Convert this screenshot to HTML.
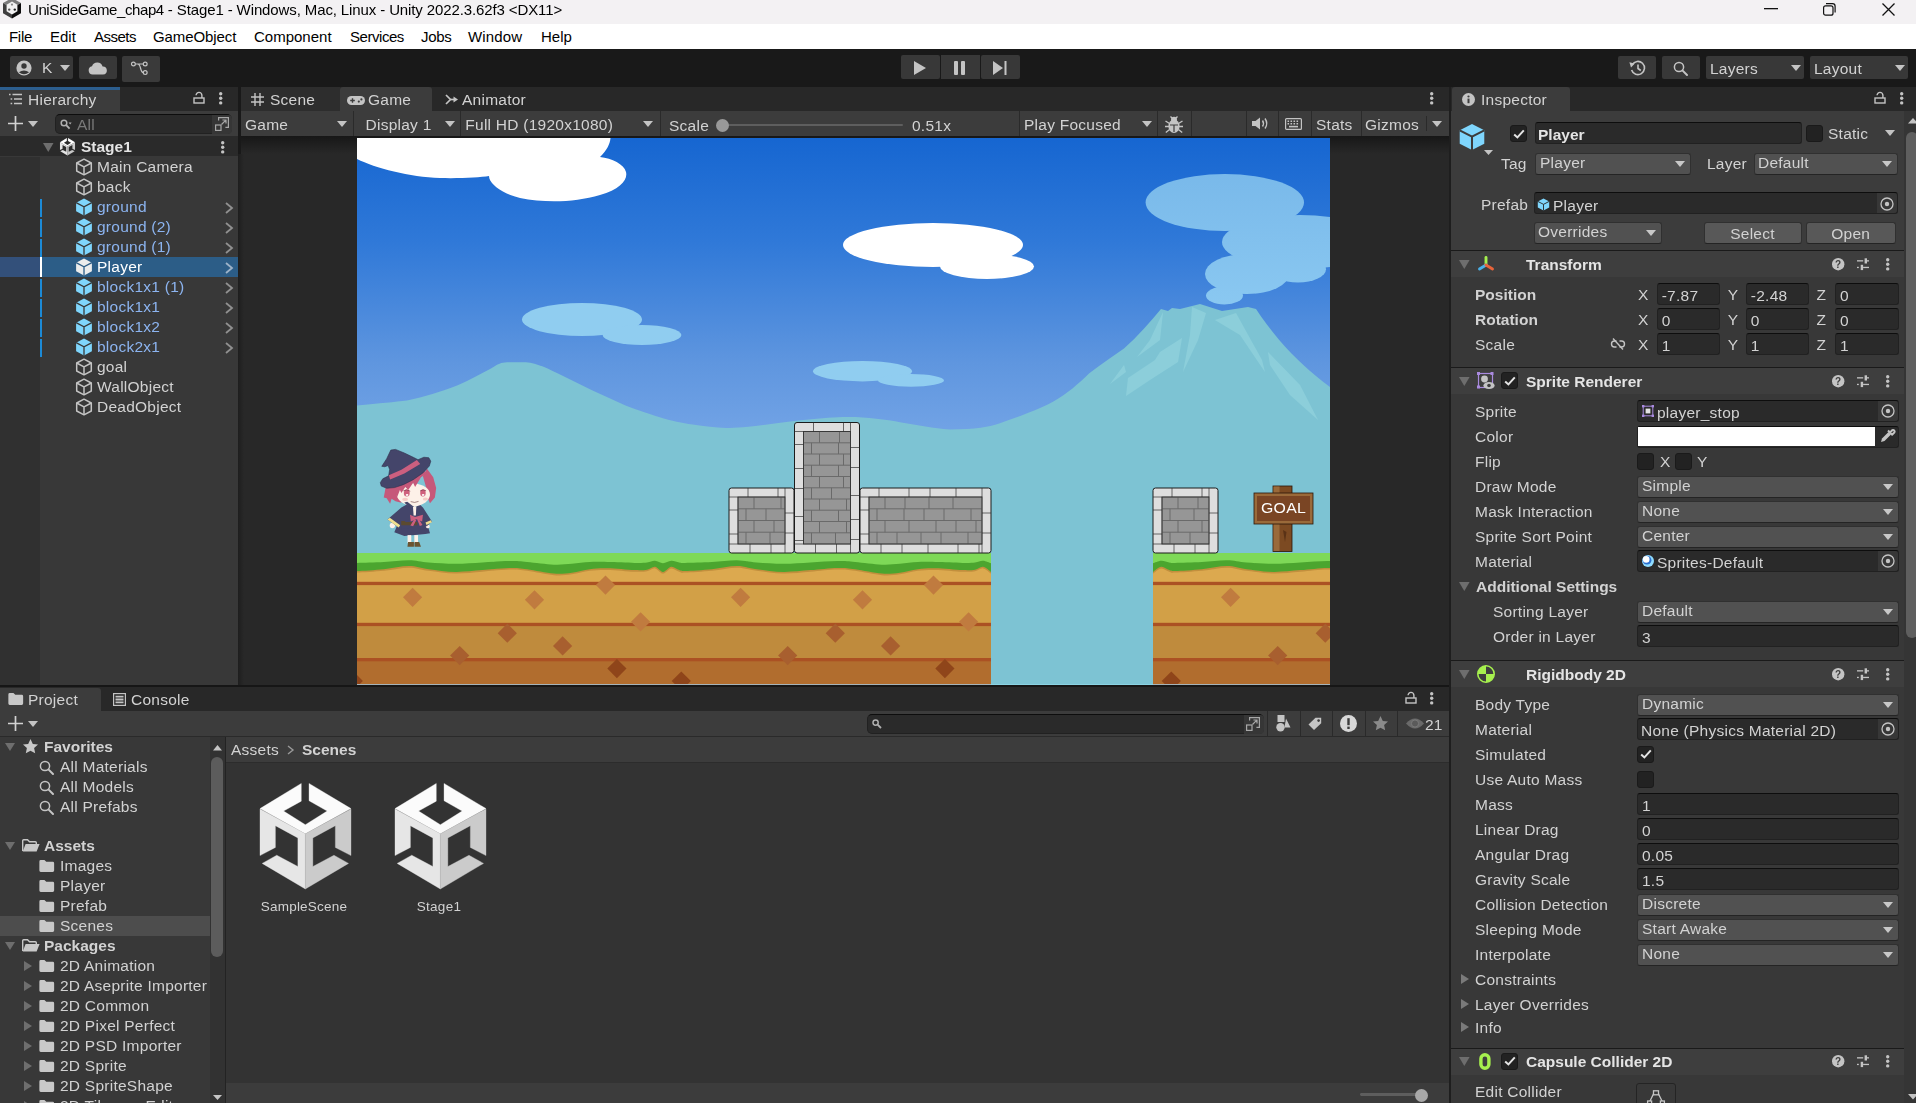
<!DOCTYPE html><html><head><meta charset="utf-8"><title>Unity</title><style>
*{box-sizing:border-box;margin:0;padding:0}
html,body{width:1916px;height:1103px;overflow:hidden;background:#191919}
body{position:relative;font-family:"Liberation Sans",sans-serif;font-size:16px;color:#d2d2d2;line-height:20px;-webkit-font-smoothing:antialiased}
#u{font-size:15.5px;letter-spacing:0.25px;position:absolute;left:0;top:0;width:1916px;height:1103px;will-change:transform}
.a{position:absolute}
.t{position:absolute;white-space:pre;line-height:20px;height:20px}
.b{font-weight:bold;letter-spacing:0}
svg{position:absolute;overflow:visible}
.fld{position:absolute;background:#2a2a2a;border:1px solid #212121;border-top-color:#0d0d0d;border-radius:3px;height:22px}
.dd{position:absolute;background:#515151;border:1px solid #303030;border-bottom-color:#242424;border-radius:3px;height:22px}
.dd:after{content:"";position:absolute;right:5px;top:7px;border-left:5px solid transparent;border-right:5px solid transparent;border-top:6px solid #c8c8c8}
.btn{position:absolute;background:#585858;border:1px solid #303030;border-bottom-color:#242424;border-radius:3px;height:22px;text-align:center;line-height:21px}
.cb{position:absolute;width:17px;height:17px;background:#222;border:1px solid #1a1a1a;border-radius:3px}
.tb{position:absolute;background:#383838;border-radius:2px;top:56px;height:23px}
.sep{position:absolute;background:#1a1a1a;height:1px}
.hdr{position:absolute;background:#3e3e3e;left:1451px;width:453px;height:26px}
.lbl{position:absolute;white-space:pre;line-height:20px;height:20px;left:1475px}
.pf{color:#8cb4f0}
</style></head><body><div class="a" style="left:0px;top:0px;width:1916px;height:24px;background:#f3f1f3;"></div>
<svg style="left:3px;top:-1.6px" width="18" height="20.4" viewBox="0 0 18 20.4" ><path d="M9 0 L18 5 L9 10 L0 5 Z" fill="#7c7c7c"/><path d="M0 5 L9 10 L9 20.4 L0 15.2 Z" fill="#3e3e3e"/><path d="M18 5 L9 10 L9 20.4 L18 15.2 Z" fill="#0c0c0c"/><path d="M9 3.6 L14.4 6.8 L14.4 13.2 L9 16.4 L3.6 13.2 L3.6 6.8 Z" fill="#f2f2f2"/><circle cx="9" cy="6.6" r="1.1" fill="#8a8a8a"/><circle cx="6.2" cy="11.6" r="1.2" fill="#555"/><circle cx="11.8" cy="11.6" r="1.2" fill="#222"/></svg>
<div class="t " style="left:28px;top:0px;color:#000;font-size:15px;letter-spacing:-0.115px;will-change:transform"><span style="letter-spacing:-0.4px">UniSideGame_chap4</span> - Stage1 - Windows, Mac, Linux - Unity 2022.3.62f3 &lt;DX11&gt;</div>
<svg style="left:1764px;top:8px" width="14" height="2" viewBox="0 0 14 2" ><rect width="14" height="1.3" fill="#111"/></svg>
<svg style="left:1823px;top:3px" width="13" height="13" viewBox="0 0 13 13" ><rect x="0.6" y="2.8" width="9.4" height="9.4" rx="2" fill="none" stroke="#111" stroke-width="1.2"/><path d="M3 0.7 H9.5 a2.6 2.6 0 0 1 2.6 2.6 V9.6" fill="none" stroke="#111" stroke-width="1.2"/></svg>
<svg style="left:1882px;top:3px" width="13" height="13" viewBox="0 0 13 13" ><path d="M0.5 0.5 L12.5 12.5 M12.5 0.5 L0.5 12.5" stroke="#111" stroke-width="1.3"/></svg>
<div class="a" style="left:0px;top:24px;width:1916px;height:25px;background:#ffffff;"></div>
<div class="t " style="left:9px;top:27px;color:#000;font-size:15px;letter-spacing:-0.3px">File</div>
<div class="t " style="left:50px;top:27px;color:#000;font-size:15px;letter-spacing:0px">Edit</div>
<div class="t " style="left:94px;top:27px;color:#000;font-size:15px;letter-spacing:-0.5px">Assets</div>
<div class="t " style="left:153px;top:27px;color:#000;font-size:15px;letter-spacing:-0.1px">GameObject</div>
<div class="t " style="left:254px;top:27px;color:#000;font-size:15px;letter-spacing:0px">Component</div>
<div class="t " style="left:350px;top:27px;color:#000;font-size:15px;letter-spacing:-0.45px">Services</div>
<div class="t " style="left:421px;top:27px;color:#000;font-size:15px;letter-spacing:-0.3px">Jobs</div>
<div class="t " style="left:468px;top:27px;color:#000;font-size:15px;letter-spacing:0.15px">Window</div>
<div class="t " style="left:541px;top:27px;color:#000;font-size:15px;letter-spacing:0px">Help</div>
<div id="u">
<div class="a" style="left:0px;top:49px;width:1916px;height:38px;background:#191919;"></div>
<div class="tb" style="left:10px;width:63px"></div><div class="tb" style="left:79px;width:38px"></div><div class="tb" style="left:122px;width:38px;height:26px;background:#3a3a3a"></div>
<svg style="left:16px;top:60px" width="16" height="16" viewBox="0 0 16 16" ><circle cx="8" cy="8" r="7.6" fill="#c4c4c4"/><circle cx="8" cy="6" r="2.7" fill="#383838"/><path d="M2.9 12.2 Q8 8.6 13.1 12.2 Q8 16.4 2.9 12.2 Z" fill="#383838"/></svg>
<div class="t " style="left:42px;top:58px;">K</div>
<svg style="left:60px;top:65px" width="10" height="6" viewBox="0 0 10 6" ><path d="M0 0 L10 0 L5.0 6 Z" fill="#c4c4c4"/></svg>
<svg style="left:88px;top:61px" width="19" height="14" viewBox="0 0 19 14" ><path d="M4.6 13.6 a4.2 4.2 0 0 1 -0.6 -8.3 a5.6 5.6 0 0 1 10.6 0.2 a4 4 0 0 1 0.4 8.1 Z" fill="#c4c4c4"/></svg>
<svg style="left:131px;top:61px" width="17" height="15" viewBox="0 0 17 15" ><g fill="none" stroke="#c4c4c4" stroke-width="1.2"><circle cx="2.4" cy="3" r="1.9"/><circle cx="14.2" cy="3" r="1.9"/><circle cx="14.2" cy="11.6" r="1.9"/><path d="M4.3 3 H12.3 M6.5 3 Q8.5 3 9.5 7 Q10.5 11.6 12.3 11.6"/></g></svg>
<div class="tb" style="left:901px;width:38.5px;top:55.3px;height:24.2px"></div><div class="tb" style="left:941px;width:39px;top:55.3px;height:24.2px;border-radius:0"></div><div class="tb" style="left:981px;width:38.5px;top:55.3px;height:24.2px"></div>
<svg style="left:914px;top:61px" width="12" height="14" viewBox="0 0 12 14" ><path d="M0 0 L12 7 L0 14 Z" fill="#c4c4c4"/></svg>
<svg style="left:954px;top:61px" width="11" height="14" viewBox="0 0 11 14" ><rect x="0" y="0" width="4" height="14" rx="1" fill="#c4c4c4"/><rect x="7" y="0" width="4" height="14" rx="1" fill="#c4c4c4"/></svg>
<svg style="left:993px;top:61px" width="14" height="14" viewBox="0 0 14 14" ><path d="M0 0 L10 7 L0 14 Z" fill="#c4c4c4"/><rect x="11.5" y="0" width="2" height="14" fill="#c4c4c4"/></svg>
<div class="tb" style="left:1618px;width:38px"></div><div class="tb" style="left:1662px;width:38px"></div><div class="tb" style="left:1706px;width:98px"></div><div class="tb" style="left:1810px;width:98px"></div>
<svg style="left:1629px;top:60px" width="17" height="16" viewBox="0 0 17 16" ><g fill="none" stroke="#c4c4c4" stroke-width="1.6"><path d="M3.2 4.6 A6.6 6.6 0 1 1 2.6 10"/><path d="M9 4.5 V8.5 L11.8 10.5"/></g><path d="M0.4 2.2 L5.8 3.4 L2 7.4 Z" fill="#c4c4c4"/></svg>
<svg style="left:1673px;top:61px" width="15" height="15" viewBox="0 0 15 15" ><circle cx="6" cy="6" r="4.6" fill="none" stroke="#c4c4c4" stroke-width="1.5"/><path d="M9.4 9.4 L14 14" stroke="#c4c4c4" stroke-width="2" stroke-linecap="round"/></svg>
<div class="t " style="left:1710px;top:59px;">Layers</div>
<svg style="left:1791px;top:65px" width="10" height="6" viewBox="0 0 10 6" ><path d="M0 0 L10 0 L5.0 6 Z" fill="#c4c4c4"/></svg>
<div class="t " style="left:1814px;top:59px;">Layout</div>
<svg style="left:1895px;top:65px" width="10" height="6" viewBox="0 0 10 6" ><path d="M0 0 L10 0 L5.0 6 Z" fill="#c4c4c4"/></svg>
<div class="a" style="left:0px;top:87px;width:238px;height:24px;background:#282828;"></div>
<div class="a" style="left:0px;top:87px;width:120px;height:24px;background:#3c3c3c;border-radius:0 3px 0 0"></div>
<div class="a" style="left:0px;top:87px;width:120px;height:2.5px;background:#2c5e8e;"></div>
<svg style="left:8px;top:93px" width="14" height="12" viewBox="0 0 14 12" ><g stroke="#c4c4c4" stroke-width="1.6"><path d="M4.5 1.5 H14 M6 6 H14 M6 10.5 H14"/><path d="M1 1.5 H2.6 M2.6 6 H4.2 M2.6 10.5 H4.2"/></g></svg>
<div class="t " style="left:28px;top:90px;">Hierarchy</div>
<svg style="left:193.4px;top:91.3px" width="12" height="13" viewBox="0 0 12 13" ><rect x="1" y="7" width="10" height="5" fill="none" stroke="#c4c4c4" stroke-width="1.4"/><path d="M8.9 7 V4.3 a2.9 2.9 0 0 0 -5.8 0" fill="none" stroke="#c4c4c4" stroke-width="1.4"/></svg>
<svg style="left:219px;top:92px" width="3.4" height="12.6" viewBox="0 0 3.4 12.6" ><circle cx="1.7" cy="1.7" r="1.7" fill="#c4c4c4"/><circle cx="1.7" cy="6.3" r="1.7" fill="#c4c4c4"/><circle cx="1.7" cy="10.9" r="1.7" fill="#c4c4c4"/></svg>
<div class="a" style="left:0px;top:111px;width:238px;height:25px;background:#3c3c3c;"></div>
<svg style="left:8px;top:116px" width="15" height="15" viewBox="0 0 15 15" ><path d="M7.5 0 V15 M0 7.5 H15" stroke="#d2d2d2" stroke-width="1.7"/></svg>
<svg style="left:28px;top:121px" width="10" height="6" viewBox="0 0 10 6" ><path d="M0 0 L10 0 L5.0 6 Z" fill="#c4c4c4"/></svg>
<div class="fld" style="left:55px;top:114px;width:177px;height:20px;border-radius:5px"></div>
<div class="a" style="left:212px;top:115px;width:20px;height:18.5px;background:#363636;border-radius:0 4px 4px 0"></div>
<svg style="left:60px;top:119px" width="11" height="11" viewBox="0 0 11 11" ><circle cx="4" cy="4" r="2.8" fill="none" stroke="#b0b0b0" stroke-width="1.5"/><path d="M6.2 6.2 L9.6 9.6" stroke="#b0b0b0" stroke-width="1.8"/><path d="M8.6 3.6 h3 l-1.5 1.8 Z" fill="#b0b0b0"/></svg>
<div class="t " style="left:77px;top:115px;color:#7a7a7a">All</div>
<svg style="left:215px;top:117px" width="14" height="14" viewBox="0 0 14 14" ><g fill="none" stroke="#a8a8a8" stroke-width="1.2"><path d="M3.6 3.6 V0.6 H13.4 V10.4 H10.4"/><rect x="0.6" y="8" width="5.4" height="5.4"/><path d="M6.5 7.5 L10.8 3.2 M7.4 3 H11 V6.6"/></g></svg>
<div class="a" style="left:0px;top:137px;width:238px;height:548px;background:#383838;"></div>
<div class="a" style="left:0px;top:157px;width:40px;height:528px;background:#303030;"></div>
<div class="a" style="left:0px;top:136px;width:238px;height:20px;background:#2a2a2a;"></div>
<svg style="left:43px;top:143px" width="10.5" height="9" viewBox="0 0 10.5 9" ><path d="M0 0 H10.5 L5.25 9 Z" fill="#6e6e6e"/></svg>
<svg style="left:59.5px;top:137.8px" width="15" height="17.5" viewBox="72 92 668 778" ><path d="M375 95 L72 280 L405 465 L740 280 L432 95 L432 222 L565 298 L405 398 L245 298 L375 225 Z" fill="#ffffff" stroke="#ffffff" stroke-width="2.5"/>
<path d="M72 282 L405 465 L405 870 L88 682 L195 622 L350 705 L350 495 L185 405 L185 565 L72 625 Z" fill="#e4e4e4" stroke="#e4e4e4" stroke-width="2.5"/>
<path d="M740 282 L405 465 L405 870 L722 682 L615 622 L460 705 L460 495 L625 405 L625 565 L740 625 Z" fill="#c8c8c8" stroke="#c8c8c8" stroke-width="2.5"/></svg>
<div class="t b" style="left:81px;top:137px;color:#e4e4e4">Stage1</div>
<svg style="left:221.2px;top:140.8px" width="3.4" height="12.6" viewBox="0 0 3.4 12.6" ><circle cx="1.7" cy="1.7" r="1.7" fill="#c4c4c4"/><circle cx="1.7" cy="6.3" r="1.7" fill="#c4c4c4"/><circle cx="1.7" cy="10.9" r="1.7" fill="#c4c4c4"/></svg>
<svg style="left:75px;top:158px" width="18" height="18" viewBox="0 0 18 18" ><g fill="none" stroke="#c4c4c4" stroke-width="1.5" stroke-linejoin="round"><path d="M9 1.2 L16.3 5 L16.3 13 L9 16.8 L1.7 13 L1.7 5 Z"/><path d="M1.7 5 L9 8.8 L16.3 5 M9 8.8 L9 16.8"/></g></svg>
<div class="t " style="left:97px;top:157px;">Main Camera</div>
<svg style="left:75px;top:178px" width="18" height="18" viewBox="0 0 18 18" ><g fill="none" stroke="#c4c4c4" stroke-width="1.5" stroke-linejoin="round"><path d="M9 1.2 L16.3 5 L16.3 13 L9 16.8 L1.7 13 L1.7 5 Z"/><path d="M1.7 5 L9 8.8 L16.3 5 M9 8.8 L9 16.8"/></g></svg>
<div class="t " style="left:97px;top:177px;">back</div>
<div class="a" style="left:40px;top:199px;width:2px;height:17.5px;background:#1c8ad6;"></div>
<svg style="left:75px;top:198px" width="18" height="18" viewBox="0 0 18 18" ><path d="M9 0.6 L16.9 4.7 L16.9 13.3 L9 17.4 L1.1 13.3 L1.1 4.7 Z" fill="#7fd6fd"/><path d="M1.1 4.7 L9 8.8 L16.9 4.7 M9 8.8 L9 17.4" fill="none" stroke="#383838" stroke-width="1.3"/></svg>
<div class="t pf" style="left:97px;top:197px;">ground</div>
<svg style="left:225px;top:202px" width="8" height="12" viewBox="0 0 8 12" ><path d="M1 1 L7 6 L1 11" fill="none" stroke="#909090" stroke-width="1.8"/></svg>
<div class="a" style="left:40px;top:219px;width:2px;height:17.5px;background:#1c8ad6;"></div>
<svg style="left:75px;top:218px" width="18" height="18" viewBox="0 0 18 18" ><path d="M9 0.6 L16.9 4.7 L16.9 13.3 L9 17.4 L1.1 13.3 L1.1 4.7 Z" fill="#7fd6fd"/><path d="M1.1 4.7 L9 8.8 L16.9 4.7 M9 8.8 L9 17.4" fill="none" stroke="#383838" stroke-width="1.3"/></svg>
<div class="t pf" style="left:97px;top:217px;">ground (2)</div>
<svg style="left:225px;top:222px" width="8" height="12" viewBox="0 0 8 12" ><path d="M1 1 L7 6 L1 11" fill="none" stroke="#909090" stroke-width="1.8"/></svg>
<div class="a" style="left:40px;top:239px;width:2px;height:17.5px;background:#1c8ad6;"></div>
<svg style="left:75px;top:238px" width="18" height="18" viewBox="0 0 18 18" ><path d="M9 0.6 L16.9 4.7 L16.9 13.3 L9 17.4 L1.1 13.3 L1.1 4.7 Z" fill="#7fd6fd"/><path d="M1.1 4.7 L9 8.8 L16.9 4.7 M9 8.8 L9 17.4" fill="none" stroke="#383838" stroke-width="1.3"/></svg>
<div class="t pf" style="left:97px;top:237px;">ground (1)</div>
<svg style="left:225px;top:242px" width="8" height="12" viewBox="0 0 8 12" ><path d="M1 1 L7 6 L1 11" fill="none" stroke="#909090" stroke-width="1.8"/></svg>
<div class="a" style="left:0px;top:257px;width:238px;height:20px;background:#2c5d87;"></div>
<div class="a" style="left:0px;top:257px;width:40px;height:20px;background:#33507a;"></div>
<div class="a" style="left:40px;top:257px;width:2px;height:20px;background:#ffffff;"></div>
<svg style="left:75px;top:258px" width="18" height="18" viewBox="0 0 18 18" ><path d="M9 0.6 L16.9 4.7 L16.9 13.3 L9 17.4 L1.1 13.3 L1.1 4.7 Z" fill="#ececec"/><path d="M1.1 4.7 L9 8.8 L16.9 4.7 M9 8.8 L9 17.4" fill="none" stroke="#2c5d87" stroke-width="1.3"/></svg>
<div class="t " style="left:97px;top:257px;color:#fff">Player</div>
<svg style="left:225px;top:262px" width="8" height="12" viewBox="0 0 8 12" ><path d="M1 1 L7 6 L1 11" fill="none" stroke="#9db3c9" stroke-width="1.8"/></svg>
<div class="a" style="left:40px;top:279px;width:2px;height:17.5px;background:#1c8ad6;"></div>
<svg style="left:75px;top:278px" width="18" height="18" viewBox="0 0 18 18" ><path d="M9 0.6 L16.9 4.7 L16.9 13.3 L9 17.4 L1.1 13.3 L1.1 4.7 Z" fill="#7fd6fd"/><path d="M1.1 4.7 L9 8.8 L16.9 4.7 M9 8.8 L9 17.4" fill="none" stroke="#383838" stroke-width="1.3"/></svg>
<div class="t pf" style="left:97px;top:277px;">block1x1 (1)</div>
<svg style="left:225px;top:282px" width="8" height="12" viewBox="0 0 8 12" ><path d="M1 1 L7 6 L1 11" fill="none" stroke="#909090" stroke-width="1.8"/></svg>
<div class="a" style="left:40px;top:299px;width:2px;height:17.5px;background:#1c8ad6;"></div>
<svg style="left:75px;top:298px" width="18" height="18" viewBox="0 0 18 18" ><path d="M9 0.6 L16.9 4.7 L16.9 13.3 L9 17.4 L1.1 13.3 L1.1 4.7 Z" fill="#7fd6fd"/><path d="M1.1 4.7 L9 8.8 L16.9 4.7 M9 8.8 L9 17.4" fill="none" stroke="#383838" stroke-width="1.3"/></svg>
<div class="t pf" style="left:97px;top:297px;">block1x1</div>
<svg style="left:225px;top:302px" width="8" height="12" viewBox="0 0 8 12" ><path d="M1 1 L7 6 L1 11" fill="none" stroke="#909090" stroke-width="1.8"/></svg>
<div class="a" style="left:40px;top:319px;width:2px;height:17.5px;background:#1c8ad6;"></div>
<svg style="left:75px;top:318px" width="18" height="18" viewBox="0 0 18 18" ><path d="M9 0.6 L16.9 4.7 L16.9 13.3 L9 17.4 L1.1 13.3 L1.1 4.7 Z" fill="#7fd6fd"/><path d="M1.1 4.7 L9 8.8 L16.9 4.7 M9 8.8 L9 17.4" fill="none" stroke="#383838" stroke-width="1.3"/></svg>
<div class="t pf" style="left:97px;top:317px;">block1x2</div>
<svg style="left:225px;top:322px" width="8" height="12" viewBox="0 0 8 12" ><path d="M1 1 L7 6 L1 11" fill="none" stroke="#909090" stroke-width="1.8"/></svg>
<div class="a" style="left:40px;top:339px;width:2px;height:17.5px;background:#1c8ad6;"></div>
<svg style="left:75px;top:338px" width="18" height="18" viewBox="0 0 18 18" ><path d="M9 0.6 L16.9 4.7 L16.9 13.3 L9 17.4 L1.1 13.3 L1.1 4.7 Z" fill="#7fd6fd"/><path d="M1.1 4.7 L9 8.8 L16.9 4.7 M9 8.8 L9 17.4" fill="none" stroke="#383838" stroke-width="1.3"/></svg>
<div class="t pf" style="left:97px;top:337px;">block2x1</div>
<svg style="left:225px;top:342px" width="8" height="12" viewBox="0 0 8 12" ><path d="M1 1 L7 6 L1 11" fill="none" stroke="#909090" stroke-width="1.8"/></svg>
<svg style="left:75px;top:358px" width="18" height="18" viewBox="0 0 18 18" ><g fill="none" stroke="#c4c4c4" stroke-width="1.5" stroke-linejoin="round"><path d="M9 1.2 L16.3 5 L16.3 13 L9 16.8 L1.7 13 L1.7 5 Z"/><path d="M1.7 5 L9 8.8 L16.3 5 M9 8.8 L9 16.8"/></g></svg>
<div class="t " style="left:97px;top:357px;">goal</div>
<svg style="left:75px;top:378px" width="18" height="18" viewBox="0 0 18 18" ><g fill="none" stroke="#c4c4c4" stroke-width="1.5" stroke-linejoin="round"><path d="M9 1.2 L16.3 5 L16.3 13 L9 16.8 L1.7 13 L1.7 5 Z"/><path d="M1.7 5 L9 8.8 L16.3 5 M9 8.8 L9 16.8"/></g></svg>
<div class="t " style="left:97px;top:377px;">WallObject</div>
<svg style="left:75px;top:398px" width="18" height="18" viewBox="0 0 18 18" ><g fill="none" stroke="#c4c4c4" stroke-width="1.5" stroke-linejoin="round"><path d="M9 1.2 L16.3 5 L16.3 13 L9 16.8 L1.7 13 L1.7 5 Z"/><path d="M1.7 5 L9 8.8 L16.3 5 M9 8.8 L9 16.8"/></g></svg>
<div class="t " style="left:97px;top:397px;">DeadObject</div>
<div class="a" style="left:241px;top:87px;width:1207.5px;height:24px;background:#282828;"></div>
<div class="a" style="left:241px;top:87px;width:99px;height:24px;background:#2d2d2d;"></div>
<div class="a" style="left:340px;top:87px;width:92px;height:24px;background:#3c3c3c;border-radius:3px 3px 0 0"></div>
<svg style="left:251px;top:93px" width="13" height="13" viewBox="0 0 13 13" ><path d="M4 0 V13 M9 0 V13 M0 4 H13 M0 9 H13" stroke="#c4c4c4" stroke-width="1.4"/></svg>
<div class="t " style="left:270px;top:90px;">Scene</div>
<svg style="left:347px;top:96px" width="18" height="9" viewBox="0 0 18 9" ><rect x="0" y="0" width="18" height="9" rx="4.5" fill="#c4c4c4"/><path d="M3.2 4.5 H7.8 M5.5 2.2 V6.8" stroke="#3c3c3c" stroke-width="1.4"/><circle cx="11.8" cy="5.6" r="1.1" fill="#3c3c3c"/><circle cx="14.4" cy="3.4" r="1.1" fill="#3c3c3c"/></svg>
<div class="t " style="left:368px;top:90px;">Game</div>
<svg style="left:445px;top:94px" width="13" height="11" viewBox="0 0 13 11" ><g fill="none" stroke="#c4c4c4" stroke-width="1.7"><path d="M1 1 L5.5 5.5 L1 10"/><path d="M5.5 5.5 H9.5"/></g><path d="M8.5 2.5 L13 5.5 L8.5 8.5 Z" fill="#c4c4c4"/></svg>
<div class="t " style="left:462px;top:90px;">Animator</div>
<svg style="left:1430px;top:92px" width="3.4" height="12.6" viewBox="0 0 3.4 12.6" ><circle cx="1.7" cy="1.7" r="1.7" fill="#c4c4c4"/><circle cx="1.7" cy="6.3" r="1.7" fill="#c4c4c4"/><circle cx="1.7" cy="10.9" r="1.7" fill="#c4c4c4"/></svg>
<div class="a" style="left:241px;top:111px;width:1207.5px;height:25.3px;background:#3c3c3c;"></div>
<div class="a" style="left:353px;top:111px;width:1px;height:26px;background:#2a2a2a;"></div>
<div class="a" style="left:460px;top:111px;width:1px;height:26px;background:#2a2a2a;"></div>
<div class="a" style="left:660px;top:111px;width:1px;height:26px;background:#2a2a2a;"></div>
<div class="a" style="left:1019px;top:111px;width:1px;height:26px;background:#2a2a2a;"></div>
<div class="a" style="left:1157px;top:111px;width:1px;height:26px;background:#2a2a2a;"></div>
<div class="a" style="left:1190.5px;top:111px;width:1px;height:26px;background:#2a2a2a;"></div>
<div class="a" style="left:1245.5px;top:111px;width:1px;height:26px;background:#2a2a2a;"></div>
<div class="a" style="left:1277.5px;top:111px;width:1px;height:26px;background:#2a2a2a;"></div>
<div class="a" style="left:1310.5px;top:111px;width:1px;height:26px;background:#2a2a2a;"></div>
<div class="a" style="left:1360.5px;top:111px;width:1px;height:26px;background:#2a2a2a;"></div>
<div class="t " style="left:245px;top:115px;">Game</div>
<svg style="left:337px;top:121px" width="10" height="6" viewBox="0 0 10 6" ><path d="M0 0 L10 0 L5.0 6 Z" fill="#c4c4c4"/></svg>
<div class="t " style="left:365.5px;top:115px;">Display 1</div>
<svg style="left:445px;top:121px" width="10" height="6" viewBox="0 0 10 6" ><path d="M0 0 L10 0 L5.0 6 Z" fill="#c4c4c4"/></svg>
<div class="t " style="left:465.3px;top:115px;">Full HD (1920x1080)</div>
<svg style="left:643px;top:121px" width="10" height="6" viewBox="0 0 10 6" ><path d="M0 0 L10 0 L5.0 6 Z" fill="#c4c4c4"/></svg>
<div class="t " style="left:669px;top:116px;">Scale</div>
<div class="a" style="left:727px;top:123.6px;width:176px;height:2.8px;background:#5e5e5e;border-radius:1.4px"></div>
<div class="a" style="left:716px;top:119px;width:13px;height:13px;border-radius:50%;background:#999"></div>
<div class="t " style="left:912px;top:116px;">0.51x</div>
<div class="t " style="left:1024px;top:115px;">Play Focused</div>
<svg style="left:1142px;top:121px" width="10" height="6" viewBox="0 0 10 6" ><path d="M0 0 L10 0 L5.0 6 Z" fill="#c4c4c4"/></svg>
<svg style="left:1165px;top:116px" width="18" height="18" viewBox="0 0 18 18" ><g fill="#c4c4c4"><ellipse cx="9" cy="10.2" rx="5.6" ry="6.8"/><circle cx="9" cy="3.8" r="3"/></g><g stroke="#c4c4c4" stroke-width="1.4"><path d="M0.5 5 L4.5 7.5 M17.5 5 L13.5 7.5 M0 10.5 H4 M18 10.5 H14 M0.8 16.5 L4.6 13.5 M17.2 16.5 L13.4 13.5 M5.5 0.5 L7.5 2.5 M12.5 0.5 L10.5 2.5"/></g><path d="M5 9 H13 M9 9 V16" stroke="#3c3c3c" stroke-width="1.2"/></svg>
<svg style="left:1252px;top:117px" width="17" height="13" viewBox="0 0 17 13" ><path d="M0 4 H3.5 L8 0.5 V12.5 L3.5 9 H0 Z" fill="#c4c4c4"/><path d="M10.5 3.5 Q12.5 6.5 10.5 9.5 M13 1.5 Q16.5 6.5 13 11.5" fill="none" stroke="#c4c4c4" stroke-width="1.4"/></svg>
<svg style="left:1285px;top:118px" width="17" height="12" viewBox="0 0 17 12" ><rect x="0.6" y="0.6" width="15.8" height="10.8" rx="1" fill="none" stroke="#c4c4c4" stroke-width="1.2"/><path d="M2.5 3.2 H14.5 M2.5 5.8 H14.5" stroke="#c4c4c4" stroke-width="1.6" stroke-dasharray="1.6 1.4"/><path d="M4 8.6 H13" stroke="#c4c4c4" stroke-width="1.6"/></svg>
<div class="a" style="left:1426px;top:116px;width:1px;height:15px;background:#2a2a2a;"></div>
<div class="t " style="left:1316px;top:115px;">Stats</div>
<div class="t " style="left:1365px;top:115px;">Gizmos</div>
<svg style="left:1432px;top:121px" width="10" height="6" viewBox="0 0 10 6" ><path d="M0 0 L10 0 L5.0 6 Z" fill="#c4c4c4"/></svg>
<div class="a" style="left:241px;top:136.3px;width:1207.5px;height:548.7px;background:#282828;"></div>
<div class="a" style="left:241px;top:136.3px;width:1207.5px;height:18px;background:linear-gradient(#171717,#282828);"></div>
<div class="a" style="left:238px;top:154px;width:6px;height:531px;background:linear-gradient(to right,#1e1e1e,#282828);"></div>
<svg class="a" style="left:357px;top:138px" width="973" height="546" viewBox="357 138 973 546"><defs><linearGradient id="sky" x1="0" y1="0" x2="0" y2="1"><stop offset="0" stop-color="#1666d1"/><stop offset="0.35" stop-color="#3079d8"/><stop offset="0.75" stop-color="#5f96df"/><stop offset="1" stop-color="#73a4e6"/></linearGradient><linearGradient id="smk" gradientUnits="userSpaceOnUse" x1="0" y1="174" x2="0" y2="305"><stop offset="0" stop-color="#79b9ea"/><stop offset="1" stop-color="#8ac8f1"/></linearGradient><clipPath id="gv"><rect x="357" y="138" width="973" height="546"/></clipPath><clipPath id="g1"><rect x="357" y="540" width="634" height="144.5"/></clipPath><clipPath id="g2"><rect x="1153" y="540" width="177" height="144.5"/></clipPath></defs><g clip-path="url(#gv)"><rect x="357" y="138" width="973" height="300" fill="url(#sky)"/><rect x="357" y="430" width="973" height="255" fill="#7dc3d3"/><g fill="url(#smk)"><ellipse cx="1224.8" cy="202.5" rx="79.2" ry="28.5" fill="url(#smk)"/><ellipse cx="1300.0" cy="242.0" rx="78.0" ry="27.0" fill="url(#smk)"/><ellipse cx="1298.0" cy="269.2" rx="28.0" ry="13.2" fill="url(#smk)"/><ellipse cx="1247.0" cy="274.0" rx="42.0" ry="20.0" fill="url(#smk)"/><ellipse cx="1224.5" cy="295.5" rx="18.5" ry="9.0" fill="url(#smk)"/></g><path d="M357 405.5 C380 403 395 402 407 400.4 C425 397 440 392 457.7 385.3 C470 380 480 374 491 368.5 C497 365 500 362.5 507 362.3 L526 362.3 C535 363 545 367 558 373.5 L592 390.3 L625.5 405.4 C640 411 650 414 659 417 C672 421 682 423 692.6 424.5 C705 426.5 715 427.5 726 428 C750 429 790 419 843 417 C885 416 915 427 950 429.5 C975 429.5 990 427 1000 423.3 C1020 416 1038 410 1053 401.8 C1068 393 1078 384 1089 373.4 C1100 365 1112 357 1124 348.5 C1138 336 1150 322 1161 309 L1168 311 L1172 308 L1180 309 L1200 304 L1222 311 L1248 307 L1256 309 C1275 338 1300 365 1330 387 L1330 440 L357 440 Z" fill="#7dc3d3"/><g fill="#8fd1dc" opacity="0.85"><path d="M1163 312 L1150 340 L1137 357 L1160 340 Z"/><path d="M1192 307 L1206 313 L1198 340 L1183 372 L1190 335 Z"/><path d="M1182 338 L1160 352 L1155 360 L1128 378 L1126 396 L1150 380 L1178 362 Z"/><path d="M1124 365 L1110 384 L1126 372 Z"/><path d="M1215 320 L1236 313 L1262 360 L1265 372 L1240 335 Z"/><path d="M1268 352 L1300 385 L1318 420 L1290 395 L1270 365 Z"/></g><path d="M357 138 L357 159 C375 168 410 177 440 178 C460 178.5 480 177.5 489 176 C489 183 500 193 520 198 C545 203 575 202.5 600 195 C620 189 628 180 626 172 C624 164 612 158.5 600 157 C607 150 610 144 610.5 138 Z" fill="#fff"/><ellipse cx="933.0" cy="245.0" rx="90.0" ry="22.0" fill="#fff"/><ellipse cx="987.0" cy="266.5" rx="47.0" ry="12.5" fill="#fff"/><ellipse cx="582.0" cy="319.5" rx="60.0" ry="16.5" fill="#90cdf0"/><ellipse cx="642.0" cy="335.0" rx="39.4" ry="10.0" fill="#90cdf0"/><ellipse cx="862.5" cy="371.2" rx="49.5" ry="10.2" fill="#90cdf0"/><ellipse cx="911.0" cy="380.4" rx="33.0" ry="6.3" fill="#90cdf0"/><g clip-path="url(#g1)"><rect x="335" y="560" width="656" height="24" fill="#dca94f"/><rect x="335" y="584" width="656" height="41" fill="#d2a047"/><rect x="335" y="625" width="656" height="35" fill="#bf8b3d"/><rect x="335" y="660" width="656" height="25" fill="#b16d2e"/><rect x="335" y="581.8" width="656" height="3.3" fill="#ab5123"/><rect x="335" y="622.8" width="656" height="3.3" fill="#ab5123"/><rect x="335" y="658.0" width="656" height="3.3" fill="#ab5123"/><path d="M412.6 587.7 L422.2 597.3 L412.6 606.9 L403.0 597.3 Z" fill="#c07b3f"/><path d="M534.5 590.2 L544.1 599.8 L534.5 609.4 L524.9 599.8 Z" fill="#c07b3f"/><path d="M605.5 575.5 L615.1 585.1 L605.5 594.7 L595.9 585.1 Z" fill="#c07b3f"/><path d="M640.6 612.2 L650.2 621.8 L640.6 631.4 L631.0 621.8 Z" fill="#c07b3f"/><path d="M507.3 623.6 L516.9 633.2 L507.3 642.8 L497.7 633.2 Z" fill="#a85f2f"/><path d="M562.6 636.3 L572.2 645.9 L562.6 655.5 L553.0 645.9 Z" fill="#a85f2f"/><path d="M459.7 646.0 L469.3 655.6 L459.7 665.2 L450.1 655.6 Z" fill="#a85f2f"/><path d="M616.9 659.0 L626.5 668.6 L616.9 678.2 L607.3 668.6 Z" fill="#8f451a"/><path d="M353.3 671.4 L362.9 681.0 L353.3 690.6 L343.7 681.0 Z" fill="#8f451a"/><path d="M740.6 587.7 L750.2 597.3 L740.6 606.9 L731.0 597.3 Z" fill="#c07b3f"/><path d="M862.5 590.2 L872.1 599.8 L862.5 609.4 L852.9 599.8 Z" fill="#c07b3f"/><path d="M933.5 575.5 L943.1 585.1 L933.5 594.7 L923.9 585.1 Z" fill="#c07b3f"/><path d="M968.6 612.2 L978.2 621.8 L968.6 631.4 L959.0 621.8 Z" fill="#c07b3f"/><path d="M835.3 623.6 L844.9 633.2 L835.3 642.8 L825.7 633.2 Z" fill="#a85f2f"/><path d="M890.6 636.3 L900.2 645.9 L890.6 655.5 L881.0 645.9 Z" fill="#a85f2f"/><path d="M787.7 646.0 L797.3 655.6 L787.7 665.2 L778.1 655.6 Z" fill="#a85f2f"/><path d="M944.9 659.0 L954.5 668.6 L944.9 678.2 L935.3 668.6 Z" fill="#8f451a"/><path d="M681.3 671.4 L690.9 681.0 L681.3 690.6 L671.7 681.0 Z" fill="#8f451a"/><path d="M335 553.1 L335.0 573.5 C336.4 572.6 340.5 568.7 343.2 568.4 C345.9 568.1 348.9 571.0 351.2 571.7 C353.5 572.4 351.6 572.8 357.0 572.6 C362.4 572.5 375.2 571.6 383.9 570.8 C392.5 570.0 401.4 567.7 408.9 567.7 C416.3 567.7 420.8 569.8 428.6 570.8 C436.4 571.8 446.6 573.4 455.5 573.5 C464.4 573.6 473.4 572.4 482.3 571.7 C491.2 571.0 501.7 569.6 509.2 569.5 C516.7 569.4 519.6 569.9 527.1 570.8 C534.6 571.8 546.5 574.6 553.9 575.2 C561.3 575.8 565.8 575.0 571.8 574.3 C577.8 573.6 583.7 571.5 589.7 570.8 C595.7 570.1 600.1 569.8 607.6 569.9 C615.1 570.0 627.9 571.5 634.5 571.7 C641.1 571.9 643.6 571.9 647.0 571.3 C650.4 570.8 652.3 568.0 655.0 568.4 C657.7 568.8 660.3 573.5 663.0 573.5 C665.7 573.5 668.5 568.7 671.2 568.4 C673.9 568.1 676.9 571.0 679.2 571.7 C681.5 572.4 679.5 572.8 685.0 572.6 C690.5 572.5 703.2 571.6 711.9 570.8 C720.5 570.0 729.4 567.7 736.9 567.7 C744.4 567.7 748.8 569.8 756.6 570.8 C764.4 571.8 774.5 573.4 783.5 573.5 C792.5 573.6 801.3 572.4 810.3 571.7 C819.2 571.0 829.7 569.6 837.2 569.5 C844.7 569.4 847.7 569.9 855.1 570.8 C862.5 571.8 874.5 574.6 881.9 575.2 C889.3 575.8 893.8 575.0 899.8 574.3 C905.8 573.6 911.7 571.5 917.7 570.8 C923.7 570.1 928.1 569.8 935.6 569.9 C943.1 570.0 955.9 571.5 962.5 571.7 C969.1 571.9 971.6 571.9 975.0 571.3 C978.4 570.8 980.3 568.0 983.0 568.4 C985.7 568.8 989.7 572.6 991.0 573.5 L991.0 553.1 Z" fill="#9a6a24" opacity="0.4"/><path d="M335 553.1 L335.0 571.9 C336.4 571.0 340.5 567.1 343.2 566.8 C345.9 566.5 348.9 569.4 351.2 570.1 C353.5 570.8 351.6 571.1 357.0 571.0 C362.4 570.9 375.2 570.0 383.9 569.2 C392.5 568.4 401.4 566.1 408.9 566.1 C416.3 566.1 420.8 568.2 428.6 569.2 C436.4 570.2 446.6 571.8 455.5 571.9 C464.4 572.0 473.4 570.8 482.3 570.1 C491.2 569.4 501.7 568.0 509.2 567.9 C516.7 567.8 519.6 568.2 527.1 569.2 C534.6 570.2 546.5 573.0 553.9 573.6 C561.3 574.2 565.8 573.4 571.8 572.7 C577.8 572.0 583.7 569.9 589.7 569.2 C595.7 568.5 600.1 568.1 607.6 568.3 C615.1 568.4 627.9 569.9 634.5 570.1 C641.1 570.3 643.6 570.2 647.0 569.7 C650.4 569.2 652.3 566.4 655.0 566.8 C657.7 567.2 660.3 571.9 663.0 571.9 C665.7 571.9 668.5 567.1 671.2 566.8 C673.9 566.5 676.9 569.4 679.2 570.1 C681.5 570.8 679.5 571.1 685.0 571.0 C690.5 570.9 703.2 570.0 711.9 569.2 C720.5 568.4 729.4 566.1 736.9 566.1 C744.4 566.1 748.8 568.2 756.6 569.2 C764.4 570.2 774.5 571.8 783.5 571.9 C792.5 572.0 801.3 570.8 810.3 570.1 C819.2 569.4 829.7 568.0 837.2 567.9 C844.7 567.8 847.7 568.2 855.1 569.2 C862.5 570.2 874.5 573.0 881.9 573.6 C889.3 574.2 893.8 573.4 899.8 572.7 C905.8 572.0 911.7 569.9 917.7 569.2 C923.7 568.5 928.1 568.1 935.6 568.3 C943.1 568.4 955.9 569.9 962.5 570.1 C969.1 570.3 971.6 570.2 975.0 569.7 C978.4 569.2 980.3 566.4 983.0 566.8 C985.7 567.2 989.7 571.0 991.0 571.9 L991.0 553.1 Z" fill="#4ba52f"/><path d="M335 553.1 L335.0 563.3 C336.4 562.9 340.5 560.9 343.2 560.8 C345.9 560.6 348.9 562.1 351.2 562.5 C353.5 562.9 351.6 563.0 357.0 562.9 C362.4 562.8 375.2 562.5 383.9 562.0 C392.5 561.5 401.4 560.1 408.9 560.2 C416.3 560.3 420.8 561.9 428.6 562.5 C436.4 563.1 446.6 563.8 455.5 563.8 C464.4 563.8 473.4 563.0 482.3 562.5 C491.2 562.0 501.7 561.2 509.2 561.1 C516.7 561.0 519.6 561.4 527.1 562.0 C534.6 562.6 546.5 564.4 553.9 564.7 C561.3 565.0 565.8 564.2 571.8 563.8 C577.8 563.3 583.7 562.3 589.7 562.0 C595.7 561.7 600.1 561.9 607.6 562.0 C615.1 562.1 627.9 562.8 634.5 562.9 C641.1 563.0 643.6 562.9 647.0 562.5 C650.4 562.1 652.3 560.6 655.0 560.8 C657.7 560.9 660.3 563.3 663.0 563.3 C665.7 563.3 668.5 560.9 671.2 560.8 C673.9 560.6 676.9 562.1 679.2 562.5 C681.5 562.9 679.5 563.0 685.0 562.9 C690.5 562.8 703.2 562.5 711.9 562.0 C720.5 561.5 729.4 560.1 736.9 560.2 C744.4 560.3 748.8 561.9 756.6 562.5 C764.4 563.1 774.5 563.8 783.5 563.8 C792.5 563.8 801.3 563.0 810.3 562.5 C819.2 562.0 829.7 561.2 837.2 561.1 C844.7 561.0 847.7 561.4 855.1 562.0 C862.5 562.6 874.5 564.4 881.9 564.7 C889.3 565.0 893.8 564.2 899.8 563.8 C905.8 563.3 911.7 562.3 917.7 562.0 C923.7 561.7 928.1 561.9 935.6 562.0 C943.1 562.1 955.9 562.8 962.5 562.9 C969.1 563.0 971.6 562.9 975.0 562.5 C978.4 562.1 980.3 560.6 983.0 560.8 C985.7 560.9 989.7 562.9 991.0 563.3 L991.0 553.1 Z" fill="#7ed957"/></g><g clip-path="url(#g2)"><rect x="1153" y="560" width="177" height="24" fill="#dca94f"/><rect x="1153" y="584" width="177" height="41" fill="#d2a047"/><rect x="1153" y="625" width="177" height="35" fill="#bf8b3d"/><rect x="1153" y="660" width="177" height="25" fill="#b16d2e"/><rect x="1153" y="581.8" width="177" height="3.3" fill="#ab5123"/><rect x="1153" y="622.8" width="177" height="3.3" fill="#ab5123"/><rect x="1153" y="658.0" width="177" height="3.3" fill="#ab5123"/><path d="M1230.6 587.7 L1240.2 597.3 L1230.6 606.9 L1221.0 597.3 Z" fill="#c07b3f"/><path d="M1352.5 590.2 L1362.1 599.8 L1352.5 609.4 L1342.9 599.8 Z" fill="#c07b3f"/><path d="M1423.5 575.5 L1433.1 585.1 L1423.5 594.7 L1413.9 585.1 Z" fill="#c07b3f"/><path d="M1458.6 612.2 L1468.2 621.8 L1458.6 631.4 L1449.0 621.8 Z" fill="#c07b3f"/><path d="M1325.3 623.6 L1334.9 633.2 L1325.3 642.8 L1315.7 633.2 Z" fill="#a85f2f"/><path d="M1380.6 636.3 L1390.2 645.9 L1380.6 655.5 L1371.0 645.9 Z" fill="#a85f2f"/><path d="M1277.7 646.0 L1287.3 655.6 L1277.7 665.2 L1268.1 655.6 Z" fill="#a85f2f"/><path d="M1434.9 659.0 L1444.5 668.6 L1434.9 678.2 L1425.3 668.6 Z" fill="#8f451a"/><path d="M1171.3 671.4 L1180.9 681.0 L1171.3 690.6 L1161.7 681.0 Z" fill="#8f451a"/><path d="M1153 553.1 L1153.0 573.5 C1154.4 572.6 1158.5 568.7 1161.2 568.4 C1163.9 568.1 1166.9 571.0 1169.2 571.7 C1171.5 572.4 1169.5 572.8 1175.0 572.6 C1180.5 572.5 1193.2 571.6 1201.9 570.8 C1210.6 570.0 1219.5 567.7 1226.9 567.7 C1234.4 567.7 1238.8 569.8 1246.6 570.8 C1254.4 571.8 1264.5 573.4 1273.5 573.5 C1282.5 573.6 1291.3 572.4 1300.3 571.7 C1309.2 571.0 1319.7 569.6 1327.2 569.5 C1334.7 569.4 1337.6 569.9 1345.1 570.8 C1352.5 571.8 1364.5 574.6 1371.9 575.2 C1379.4 575.8 1383.8 575.0 1389.8 574.3 C1395.8 573.6 1401.7 571.5 1407.7 570.8 C1413.7 570.1 1418.1 569.8 1425.6 569.9 C1433.1 570.0 1445.9 571.5 1452.5 571.7 C1459.1 571.9 1461.6 571.9 1465.0 571.3 C1468.4 570.8 1470.3 568.0 1473.0 568.4 C1475.7 568.8 1479.7 572.6 1481.0 573.5 L1481.0 553.1 Z" fill="#9a6a24" opacity="0.4"/><path d="M1153 553.1 L1153.0 571.9 C1154.4 571.0 1158.5 567.1 1161.2 566.8 C1163.9 566.5 1166.9 569.4 1169.2 570.1 C1171.5 570.8 1169.5 571.1 1175.0 571.0 C1180.5 570.9 1193.2 570.0 1201.9 569.2 C1210.6 568.4 1219.5 566.1 1226.9 566.1 C1234.4 566.1 1238.8 568.2 1246.6 569.2 C1254.4 570.2 1264.5 571.8 1273.5 571.9 C1282.5 572.0 1291.3 570.8 1300.3 570.1 C1309.2 569.4 1319.7 568.0 1327.2 567.9 C1334.7 567.8 1337.6 568.2 1345.1 569.2 C1352.5 570.2 1364.5 573.0 1371.9 573.6 C1379.4 574.2 1383.8 573.4 1389.8 572.7 C1395.8 572.0 1401.7 569.9 1407.7 569.2 C1413.7 568.5 1418.1 568.1 1425.6 568.3 C1433.1 568.4 1445.9 569.9 1452.5 570.1 C1459.1 570.3 1461.6 570.2 1465.0 569.7 C1468.4 569.2 1470.3 566.4 1473.0 566.8 C1475.7 567.2 1479.7 571.0 1481.0 571.9 L1481.0 553.1 Z" fill="#4ba52f"/><path d="M1153 553.1 L1153.0 563.3 C1154.4 562.9 1158.5 560.9 1161.2 560.8 C1163.9 560.6 1166.9 562.1 1169.2 562.5 C1171.5 562.9 1169.5 563.0 1175.0 562.9 C1180.5 562.8 1193.2 562.5 1201.9 562.0 C1210.6 561.5 1219.5 560.1 1226.9 560.2 C1234.4 560.3 1238.8 561.9 1246.6 562.5 C1254.4 563.1 1264.5 563.8 1273.5 563.8 C1282.5 563.8 1291.3 563.0 1300.3 562.5 C1309.2 562.0 1319.7 561.2 1327.2 561.1 C1334.7 561.0 1337.6 561.4 1345.1 562.0 C1352.5 562.6 1364.5 564.4 1371.9 564.7 C1379.4 565.0 1383.8 564.2 1389.8 563.8 C1395.8 563.3 1401.7 562.3 1407.7 562.0 C1413.7 561.7 1418.1 561.9 1425.6 562.0 C1433.1 562.1 1445.9 562.8 1452.5 562.9 C1459.1 563.0 1461.6 562.9 1465.0 562.5 C1468.4 562.1 1470.3 560.6 1473.0 560.8 C1475.7 560.9 1479.7 562.9 1481.0 563.3 L1481.0 553.1 Z" fill="#7ed957"/></g><rect x="729" y="488" width="65" height="65" rx="2.5" fill="#dedede" stroke="#1c1c1c" stroke-width="1"/><rect x="738" y="497" width="47" height="47" fill="#969696" stroke="#5a5a5a" stroke-width="1"/><path d="M738 508.8 H785 M738 520.5 H785 M738 532.2 H785 M754.0 497.0 V508.8 M781.0 497.0 V508.8 M746.0 508.8 V520.5 M766.0 508.8 V520.5 M754.0 520.5 V532.2 M774.0 520.5 V532.2 M746.0 532.2 V544.0 M770.0 532.2 V544.0" stroke="#6a6a6a" stroke-width="1" fill="none"/><path d="M748.0 488 V497 M778.0 488 V497 M750.0 544 V553 M771.0 544 V553 M729 510.0 H738 M729 534.0 H738 M785 513.0 H794 M785 533.0 H794 M785 488 V553 M738 497 V544 M729 544 H785 M729 497 H785" stroke="#2a2a2a" stroke-width="0.9" fill="none" opacity="0.75"/><rect x="794.5" y="422.5" width="65" height="130.5" rx="2.5" fill="#dedede" stroke="#1c1c1c" stroke-width="1"/><rect x="803.5" y="431.5" width="47" height="112.5" fill="#969696" stroke="#5a5a5a" stroke-width="1"/><path d="M803.5 442.8 H850.5 M803.5 454.0 H850.5 M803.5 465.2 H850.5 M803.5 476.5 H850.5 M803.5 487.8 H850.5 M803.5 499.0 H850.5 M803.5 510.2 H850.5 M803.5 521.5 H850.5 M803.5 532.8 H850.5 M819.5 431.5 V442.8 M839.5 431.5 V442.8 M811.5 442.8 V454.0 M838.5 442.8 V454.0 M819.5 454.0 V465.2 M843.5 454.0 V465.2 M811.5 465.2 V476.5 M838.5 465.2 V476.5 M819.5 476.5 V487.8 M843.5 476.5 V487.8 M811.5 487.8 V499.0 M831.5 487.8 V499.0 M819.5 499.0 V510.2 M846.5 499.0 V510.2 M811.5 510.2 V521.5 M838.5 510.2 V521.5 M819.5 521.5 V532.8 M846.5 521.5 V532.8 M811.5 532.8 V544.0 M835.5 532.8 V544.0" stroke="#6a6a6a" stroke-width="1" fill="none"/><path d="M813.5 422.5 V431.5 M843.5 422.5 V431.5 M815.5 544.0 V553.0 M836.5 544.0 V553.0 M794.5 444.5 H803.5 M794.5 468.5 H803.5 M794.5 488.5 H803.5 M794.5 516.5 H803.5 M794.5 540.5 H803.5 M850.5 447.5 H859.5 M850.5 467.5 H859.5 M850.5 495.5 H859.5 M850.5 519.5 H859.5 M850.5 539.5 H859.5 M850.5 422.5 V553.0 M803.5 431.5 V544.0 M794.5 544.0 H850.5 M794.5 431.5 H850.5" stroke="#2a2a2a" stroke-width="0.9" fill="none" opacity="0.75"/><rect x="860" y="488" width="131" height="65" rx="2.5" fill="#dedede" stroke="#1c1c1c" stroke-width="1"/><rect x="869" y="497" width="113" height="47" fill="#969696" stroke="#5a5a5a" stroke-width="1"/><path d="M869 508.8 H982 M869 520.5 H982 M869 532.2 H982 M885.0 497.0 V508.8 M905.0 497.0 V508.8 M929.0 497.0 V508.8 M953.0 497.0 V508.8 M877.0 508.8 V520.5 M904.0 508.8 V520.5 M924.0 508.8 V520.5 M944.0 508.8 V520.5 M971.0 508.8 V520.5 M885.0 520.5 V532.2 M909.0 520.5 V532.2 M936.0 520.5 V532.2 M956.0 520.5 V532.2 M976.0 520.5 V532.2 M877.0 532.2 V544.0 M897.0 532.2 V544.0 M921.0 532.2 V544.0 M941.0 532.2 V544.0 M968.0 532.2 V544.0" stroke="#6a6a6a" stroke-width="1" fill="none"/><path d="M879.0 488 V497 M909.0 488 V497 M930.0 488 V497 M956.0 488 V497 M881.0 544 V553 M902.0 544 V553 M928.0 544 V553 M958.0 544 V553 M979.0 544 V553 M860 510.0 H869 M860 534.0 H869 M982 513.0 H991 M982 533.0 H991 M982 488 V553 M869 497 V544 M860 544 H982 M860 497 H982" stroke="#2a2a2a" stroke-width="0.9" fill="none" opacity="0.75"/><rect x="1153" y="488" width="65" height="65" rx="2.5" fill="#dedede" stroke="#1c1c1c" stroke-width="1"/><rect x="1162" y="497" width="47" height="47" fill="#969696" stroke="#5a5a5a" stroke-width="1"/><path d="M1162 508.8 H1209 M1162 520.5 H1209 M1162 532.2 H1209 M1178.0 497.0 V508.8 M1198.0 497.0 V508.8 M1170.0 508.8 V520.5 M1194.0 508.8 V520.5 M1178.0 520.5 V532.2 M1202.0 520.5 V532.2 M1170.0 532.2 V544.0 M1190.0 532.2 V544.0" stroke="#6a6a6a" stroke-width="1" fill="none"/><path d="M1172.0 488 V497 M1202.0 488 V497 M1174.0 544 V553 M1195.0 544 V553 M1153 510.0 H1162 M1153 534.0 H1162 M1209 513.0 H1218 M1209 533.0 H1218 M1209 488 V553 M1162 497 V544 M1153 544 H1209 M1153 497 H1209" stroke="#2a2a2a" stroke-width="0.9" fill="none" opacity="0.75"/><rect x="1273" y="486" width="19" height="65.5" fill="#7c4a22" stroke="#2a1608" stroke-width="0.8"/><rect x="1273.5" y="486.5" width="6" height="64.5" fill="#9a6a3a"/><path d="M1283 530 l2 12 l1.5 -10 Z M1287 500 l1.5 14 l1 -12 Z" fill="#5a3216"/><rect x="1254" y="493" width="59" height="31" fill="#9a6a3a" stroke="#2a1608" stroke-width="0.8"/><rect x="1257" y="496" width="53" height="25" fill="#7a4524"/><text x="1283.5" y="513.4" font-family="Liberation Sans, sans-serif" font-size="15.5" fill="#fff" text-anchor="middle" textLength="45" lengthAdjust="spacingAndGlyphs">GOAL</text><g transform="translate(372 444) scale(0.09796)">
<path d="M560 250 L625 340 L655 450 L642 545 L592 605 L572 560 L560 470 L520 330 Z" fill="#c6587a"/>
<path d="M140 440 L120 545 L150 555 L185 610 L200 560 L240 585 L300 600 L300 430 Z" fill="#c6587a"/>
<path d="M228 900 L330 940 L545 920 L592 912 L560 800 L500 700 L330 700 L270 800 Z" fill="#44456a"/>
<rect x="363" y="930" width="38" height="80" fill="#fdf1e8"/><rect x="432" y="930" width="38" height="80" fill="#fdf1e8"/>
<path d="M368 1000 H428 V1048 H362 Z M434 1000 H482 L500 1048 H434 Z" fill="#6b5430"/>
<circle cx="208" cy="832" r="27" fill="#fdf1e8"/><circle cx="570" cy="842" r="19" fill="#fdf1e8"/>
<path d="M372 608 L300 648 L158 770 L272 852 L292 800 L300 870 L420 850 L470 700 L430 640 Z" fill="#44456a"/>
<path d="M478 608 L522 650 L612 790 L556 842 L540 790 L540 880 L470 860 L440 700 L450 640 Z" fill="#44456a"/>
<path d="M418 640 H452 L448 730 H425 Z" fill="#fdf1e8"/>
<path d="M158 770 L182 752 L288 830 L272 852 Z" fill="#efe08e"/>
<path d="M546 802 L600 778 L612 800 L556 828 Z" fill="#efe08e"/>
<path d="M298 786 H336 L342 796 H462 V830 H298 Z" fill="#5b4a30"/>
<path d="M388 722 L440 745 L520 722 L512 790 L452 768 L396 790 Z" fill="#cc5f7f"/>
<path d="M430 770 L392 832 L420 840 L452 775 Z M462 770 L488 838 L515 828 L480 768 Z" fill="#cc5f7f"/>
<path d="M250 520 Q250 420 420 400 Q590 420 592 520 Q580 610 430 642 Q270 610 250 520 Z" fill="#fdf1e8"/>
<path d="M330 598 L372 640 L430 642 L360 590 Z" fill="#44456a"/>
<ellipse cx="355" cy="500" rx="30" ry="36" fill="#cf5f7c"/><ellipse cx="520" cy="500" rx="28" ry="36" fill="#cf5f7c"/>
<ellipse cx="358" cy="520" rx="14" ry="9" fill="#fff"/><ellipse cx="522" cy="520" rx="14" ry="9" fill="#fff"/>
<path d="M320 478 Q355 455 390 482 M490 480 Q522 456 552 478" stroke="#7a3246" stroke-width="7" fill="none"/>
<ellipse cx="338" cy="565" rx="30" ry="16" fill="#f7cbc6"/><ellipse cx="545" cy="562" rx="26" ry="16" fill="#f7cbc6"/>
<path d="M395 588 Q435 606 475 586" stroke="#6a3c3c" stroke-width="6" fill="none"/>
<path d="M240 470 L250 560 L285 470 L300 500 L340 440 L370 470 L420 395 L440 440 L500 340 L560 300 L520 260 L300 380 Z" fill="#c6587a"/>
<path d="M100 228 L150 150 L192 62 L240 55 L330 92 L420 135 L470 160 L530 135 L580 140 L600 175 L585 225 L520 295 L420 365 L320 415 L230 445 L150 452 L95 430 L85 395 L110 355 L170 325 L180 260 L165 220 L130 232 Z" fill="#44456a" stroke="#2e2f4a" stroke-width="6" stroke-linejoin="round"/>
<path d="M172 318 L300 262 L458 163 L492 203 L330 302 L185 362 Z" fill="#cc5f7f"/>
</g></g></svg>
<div class="a" style="left:357px;top:684px;width:973px;height:1.2px;background:#8ad3e3;"></div>
<div class="a" style="left:357px;top:684px;width:634px;height:1.2px;background:#a6b3b8;"></div>
<div class="a" style="left:1153px;top:684px;width:177px;height:1.2px;background:#a6b3b8;"></div>
<div class="a" style="left:1448.5px;top:87px;width:2.5px;height:1016px;background:#1e1e1e;"></div>
<div class="a" style="left:1451px;top:87px;width:465px;height:24px;background:#282828;"></div>
<div class="a" style="left:1452px;top:87px;width:118px;height:24px;background:#3c3c3c;border-radius:3px 3px 0 0"></div>
<svg style="left:1462px;top:93px" width="13" height="13" viewBox="0 0 13 13" ><circle cx="6.5" cy="6.5" r="6.5" fill="#c4c4c4"/><rect x="5.5" y="5.6" width="2" height="4.6" fill="#3c3c3c"/><circle cx="6.5" cy="3.5" r="1.1" fill="#3c3c3c"/></svg>
<div class="t " style="left:1481px;top:90px;">Inspector</div>
<svg style="left:1874.4px;top:91.3px" width="12" height="13" viewBox="0 0 12 13" ><rect x="1" y="7" width="10" height="5" fill="none" stroke="#c4c4c4" stroke-width="1.4"/><path d="M8.9 7 V4.3 a2.9 2.9 0 0 0 -5.8 0" fill="none" stroke="#c4c4c4" stroke-width="1.4"/></svg>
<svg style="left:1900px;top:92px" width="3.4" height="12.6" viewBox="0 0 3.4 12.6" ><circle cx="1.7" cy="1.7" r="1.7" fill="#c4c4c4"/><circle cx="1.7" cy="6.3" r="1.7" fill="#c4c4c4"/><circle cx="1.7" cy="10.9" r="1.7" fill="#c4c4c4"/></svg>
<div class="a" style="left:1451px;top:111px;width:453px;height:992px;background:#383838;"></div>
<div class="a" style="left:1451px;top:111px;width:453px;height:140px;background:#3c3c3c;"></div>
<div class="a" style="left:1904px;top:111px;width:12px;height:992px;background:#353535;"></div>
<div class="a" style="left:1906px;top:132px;width:12px;height:505.5px;background:#5f5f5f;border-radius:6px"></div>
<svg style="left:1908px;top:118px" width="10" height="5.5" viewBox="0 0 10 5.5" ><path d="M0 5.5 L5 0 L10 5.5 Z" fill="#c4c4c4"/></svg>
<svg style="left:1908px;top:1094px" width="10" height="5.5" viewBox="0 0 10 5.5" ><path d="M0 0 L5 5.5 L10 0 Z" fill="#c4c4c4"/></svg>
<svg style="left:1458px;top:123.2px" width="28" height="28" viewBox="0 0 18 18" ><path d="M9 0.6 L16.9 4.7 L16.9 13.3 L9 17.4 L1.1 13.3 L1.1 4.7 Z" fill="#7fd6fd"/><path d="M1.1 4.7 L9 8.8 L16.9 4.7 M9 8.8 L9 17.4" fill="none" stroke="#3c3c3c" stroke-width="1.3"/></svg>
<svg style="left:1484px;top:150px" width="9" height="5" viewBox="0 0 9 5" ><path d="M0 0 L9 0 L4.5 5 Z" fill="#c4c4c4"/></svg>
<div class="cb" style="left:1510px;top:125px"></div>
<svg style="left:1512.5px;top:128.5px" width="12" height="10" viewBox="0 0 12 10" ><path d="M1.2 5.4 L4.4 8.4 L10.8 1.4" fill="none" stroke="#e4e4e4" stroke-width="2"/></svg>
<div class="fld" style="left:1535px;top:122px;width:267px;height:22.4px"></div>
<div class="t b" style="left:1538px;top:125px;color:#e4e4e4">Player</div>
<div class="cb" style="left:1806px;top:125px"></div>
<div class="t " style="left:1828px;top:124px;">Static</div>
<svg style="left:1885px;top:130px" width="10" height="6" viewBox="0 0 10 6" ><path d="M0 0 L10 0 L5.0 6 Z" fill="#c4c4c4"/></svg>
<div class="t " style="left:1501px;top:154px;">Tag</div>
<div class="dd" style="left:1535px;top:152.5px;width:156px"></div>
<div class="t " style="left:1540px;top:153px;">Player</div>
<div class="t " style="left:1707px;top:154px;">Layer</div>
<div class="dd" style="left:1753.5px;top:152.5px;width:144.5px"></div>
<div class="t " style="left:1758px;top:153px;">Default</div>
<div class="t " style="left:1481px;top:195px;">Prefab</div>
<div class="fld" style="left:1534px;top:192.3px;width:364px"></div>
<div class="a" style="left:1877px;top:193.3px;width:20px;height:20px;background:#373737;border-radius:0 3px 3px 0"></div>
<svg style="left:1537px;top:198px" width="13" height="13" viewBox="0 0 18 18" ><path d="M9 0.6 L16.9 4.7 L16.9 13.3 L9 17.4 L1.1 13.3 L1.1 4.7 Z" fill="#7fd6fd"/><path d="M1.1 4.7 L9 8.8 L16.9 4.7 M9 8.8 L9 17.4" fill="none" stroke="#2a2a2a" stroke-width="1.3"/></svg>
<div class="t " style="left:1553px;top:196px;">Player</div>
<svg style="left:1880px;top:196.8px" width="14" height="14" viewBox="0 0 14 14" ><circle cx="7" cy="7" r="6" fill="none" stroke="#c4c4c4" stroke-width="1.3"/><circle cx="7" cy="7" r="2.2" fill="#c4c4c4"/></svg>
<div class="dd" style="left:1534px;top:221.5px;width:128px"></div>
<div class="t " style="left:1538px;top:222px;">Overrides</div>
<div class="btn" style="left:1703.5px;top:221.7px;width:98px">Select</div><div class="btn" style="left:1805.7px;top:221.7px;width:90px">Open</div>
<div class="sep" style="left:1451px;top:250px;width:453px"></div>
<div class="hdr" style="top:251px"></div>
<svg style="left:1459px;top:259.5px" width="10.6" height="9" viewBox="0 0 10.6 9" ><path d="M0 0 H10.6 L5.3 9 Z" fill="#6e6e6e"/></svg>
<svg style="left:1478px;top:255.5px" width="16" height="15" viewBox="0 0 16 15" ><path d="M8 9 V1.5" stroke="#a6f04e" stroke-width="2.9" stroke-linecap="round"/><path d="M8 9 L1.5 13" stroke="#4ab0e8" stroke-width="2.9" stroke-linecap="round"/><path d="M8 9 L14.5 13" stroke="#e8643a" stroke-width="2.9" stroke-linecap="round"/></svg>
<div class="t b" style="left:1526px;top:254.5px;color:#e4e4e4">Transform</div>
<svg style="left:1831.9px;top:257.8px" width="12.4" height="12.4" viewBox="0 0 12.4 12.4" ><circle cx="6.2" cy="6.2" r="6.2" fill="#c4c4c4"/><text x="6.2" y="10" font-size="10" font-weight="bold" text-anchor="middle" fill="#3e3e3e" font-family="Liberation Sans, sans-serif">?</text></svg>
<svg style="left:1857px;top:257.8px" width="12" height="12.4" viewBox="0 0 12 12.4" ><g fill="#c4c4c4"><rect x="0" y="2.2" width="6.2" height="1.3"/><rect x="7.6" y="0.3" width="2.4" height="5.2"/><rect x="10" y="2.2" width="2" height="1.3"/><rect x="0" y="8.8" width="1.8" height="1.3"/><rect x="3.7" y="6.8" width="2.4" height="5.3"/><rect x="6.1" y="8.8" width="5.9" height="1.3"/></g></svg>
<svg style="left:1886.3px;top:257.7px" width="3.4" height="12.6" viewBox="0 0 3.4 12.6" ><circle cx="1.7" cy="1.7" r="1.7" fill="#c4c4c4"/><circle cx="1.7" cy="6.3" r="1.7" fill="#c4c4c4"/><circle cx="1.7" cy="10.9" r="1.7" fill="#c4c4c4"/></svg>
<div class="t b" style="left:1475px;top:285px;">Position</div>
<div class="t " style="left:1638px;top:285px;">X</div>
<div class="fld" style="left:1656.7px;top:283.2px;width:63.6px"></div>
<div class="t " style="left:1661.7px;top:285.5px;">-7.87</div>
<div class="t " style="left:1727.7px;top:285px;">Y</div>
<div class="fld" style="left:1745.8px;top:283.2px;width:63.6px"></div>
<div class="t " style="left:1750.8px;top:285.5px;">-2.48</div>
<div class="t " style="left:1816.6px;top:285px;">Z</div>
<div class="fld" style="left:1835px;top:283.2px;width:63.6px"></div>
<div class="t " style="left:1840px;top:285.5px;">0</div>
<div class="t b" style="left:1475px;top:310px;">Rotation</div>
<div class="t " style="left:1638px;top:310px;">X</div>
<div class="fld" style="left:1656.7px;top:308.2px;width:63.6px"></div>
<div class="t " style="left:1661.7px;top:310.5px;">0</div>
<div class="t " style="left:1727.7px;top:310px;">Y</div>
<div class="fld" style="left:1745.8px;top:308.2px;width:63.6px"></div>
<div class="t " style="left:1750.8px;top:310.5px;">0</div>
<div class="t " style="left:1816.6px;top:310px;">Z</div>
<div class="fld" style="left:1835px;top:308.2px;width:63.6px"></div>
<div class="t " style="left:1840px;top:310.5px;">0</div>
<div class="t " style="left:1475px;top:335px;">Scale</div>
<div class="t " style="left:1638px;top:335px;">X</div>
<div class="fld" style="left:1656.7px;top:333.2px;width:63.6px"></div>
<div class="t " style="left:1661.7px;top:335.5px;">1</div>
<div class="t " style="left:1727.7px;top:335px;">Y</div>
<div class="fld" style="left:1745.8px;top:333.2px;width:63.6px"></div>
<div class="t " style="left:1750.8px;top:335.5px;">1</div>
<div class="t " style="left:1816.6px;top:335px;">Z</div>
<div class="fld" style="left:1835px;top:333.2px;width:63.6px"></div>
<div class="t " style="left:1840px;top:335.5px;">1</div>
<svg style="left:1610px;top:338px" width="16" height="12" viewBox="0 0 16 12" ><g fill="none" stroke="#c4c4c4" stroke-width="1.4"><path d="M6.5 3 H4.5 a3 3 0 0 0 0 6 H6.5 M9.5 3 H11.5 a3 3 0 0 1 0 6 H9.5"/><path d="M3 0.5 L13 11.5"/></g></svg>
<div class="sep" style="left:1451px;top:367px;width:453px"></div>
<div class="hdr" style="top:368px"></div>
<svg style="left:1459px;top:376.5px" width="10.6" height="9" viewBox="0 0 10.6 9" ><path d="M0 0 H10.6 L5.3 9 Z" fill="#6e6e6e"/></svg>
<svg style="left:1477px;top:371.5px" width="18" height="18" viewBox="0 0 18 18" ><rect x="1.5" y="1.5" width="14" height="14" fill="none" stroke="#a98adf" stroke-width="1.2"/><g fill="#a98adf"><rect x="0" y="0" width="3" height="3"/><rect x="13.5" y="0" width="3" height="3"/><rect x="0" y="13.5" width="3" height="3"/></g><circle cx="7.5" cy="7" r="3.4" fill="#c4c4c4"/><ellipse cx="12" cy="13.5" rx="5.6" ry="3.6" fill="#c4c4c4"/><circle cx="12" cy="13.5" r="1.8" fill="#3e3e3e"/></svg>
<div class="cb" style="left:1501px;top:372.0px"></div>
<svg style="left:1503.5px;top:375.5px" width="12" height="10" viewBox="0 0 12 10" ><path d="M1.2 5.4 L4.4 8.4 L10.8 1.4" fill="none" stroke="#e4e4e4" stroke-width="2"/></svg>
<div class="t b" style="left:1526px;top:371.5px;color:#e4e4e4">Sprite Renderer</div>
<svg style="left:1831.9px;top:374.8px" width="12.4" height="12.4" viewBox="0 0 12.4 12.4" ><circle cx="6.2" cy="6.2" r="6.2" fill="#c4c4c4"/><text x="6.2" y="10" font-size="10" font-weight="bold" text-anchor="middle" fill="#3e3e3e" font-family="Liberation Sans, sans-serif">?</text></svg>
<svg style="left:1857px;top:374.8px" width="12" height="12.4" viewBox="0 0 12 12.4" ><g fill="#c4c4c4"><rect x="0" y="2.2" width="6.2" height="1.3"/><rect x="7.6" y="0.3" width="2.4" height="5.2"/><rect x="10" y="2.2" width="2" height="1.3"/><rect x="0" y="8.8" width="1.8" height="1.3"/><rect x="3.7" y="6.8" width="2.4" height="5.3"/><rect x="6.1" y="8.8" width="5.9" height="1.3"/></g></svg>
<svg style="left:1886.3px;top:374.7px" width="3.4" height="12.6" viewBox="0 0 3.4 12.6" ><circle cx="1.7" cy="1.7" r="1.7" fill="#c4c4c4"/><circle cx="1.7" cy="6.3" r="1.7" fill="#c4c4c4"/><circle cx="1.7" cy="10.9" r="1.7" fill="#c4c4c4"/></svg>
<div class="t " style="left:1475px;top:402px;">Sprite</div>
<div class="fld" style="left:1637px;top:400.2px;width:261.5px"></div>
<div class="a" style="left:1877.5px;top:401.2px;width:20px;height:20px;background:#373737;border-radius:0 3px 3px 0"></div>
<svg style="left:1642px;top:405px" width="12" height="12" viewBox="0 0 12 12" ><rect x="1.2" y="1.2" width="9.6" height="9.6" fill="none" stroke="#a98adf" stroke-width="1"/><g fill="#a98adf"><rect width="2.4" height="2.4"/><rect x="9.6" width="2.4" height="2.4"/><rect y="9.6" width="2.4" height="2.4"/><rect x="9.6" y="9.6" width="2.4" height="2.4"/></g><rect x="3.6" y="3.6" width="4.8" height="4.8" fill="#e4e4e4"/></svg>
<div class="t " style="left:1657px;top:402.5px;">player_stop</div>
<svg style="left:1880.5px;top:404px" width="14" height="14" viewBox="0 0 14 14" ><circle cx="7" cy="7" r="6" fill="none" stroke="#c4c4c4" stroke-width="1.3"/><circle cx="7" cy="7" r="2.2" fill="#c4c4c4"/></svg>
<div class="t " style="left:1475px;top:427px;">Color</div>
<div class="fld" style="left:1637px;top:425.5px;width:261.5px"></div>
<div class="a" style="left:1638px;top:426.5px;width:237px;height:19px;background:#ffffff;"></div>
<svg style="left:1880px;top:428px" width="15" height="15" viewBox="0 0 15 15" ><path d="M1 14 L2 10.5 L8.5 4 L11 6.5 L4.5 13 Z" fill="#c4c4c4"/><path d="M8 2.5 L12.5 7 M9.8 4.8 L12.2 2.2 a1.6 1.6 0 0 1 2.2 2.2 L11.8 7" stroke="#c4c4c4" stroke-width="2" fill="none"/></svg>
<div class="t " style="left:1475px;top:452px;">Flip</div>
<div class="cb" style="left:1637px;top:452.5px"></div>
<div class="t " style="left:1660px;top:452px;">X</div>
<div class="cb" style="left:1675px;top:452.5px"></div>
<div class="t " style="left:1697px;top:452px;">Y</div>
<div class="t " style="left:1475px;top:477px;">Draw Mode</div>
<div class="dd" style="left:1637px;top:475.5px;width:261.5px"></div>
<div class="t " style="left:1642px;top:476.3px;">Simple</div>
<div class="t " style="left:1475px;top:502px;">Mask Interaction</div>
<div class="dd" style="left:1637px;top:500.5px;width:261.5px"></div>
<div class="t " style="left:1642px;top:501.3px;">None</div>
<div class="t " style="left:1475px;top:527px;">Sprite Sort Point</div>
<div class="dd" style="left:1637px;top:525.5px;width:261.5px"></div>
<div class="t " style="left:1642px;top:526.3px;">Center</div>
<div class="t " style="left:1475px;top:552px;">Material</div>
<div class="fld" style="left:1637px;top:550.2px;width:261.5px"></div>
<div class="a" style="left:1877.5px;top:551.2px;width:20px;height:20px;background:#373737;border-radius:0 3px 3px 0"></div>
<svg style="left:1642px;top:555px" width="12" height="12" viewBox="0 0 12 12" ><circle cx="6" cy="6" r="6" fill="#8fdcff"/><circle cx="5" cy="5.2" r="4.4" fill="#2a6fd0"/><circle cx="4.2" cy="4.4" r="3.3" fill="#fff"/></svg>
<div class="t " style="left:1657px;top:552.5px;">Sprites-Default</div>
<svg style="left:1880.5px;top:554px" width="14" height="14" viewBox="0 0 14 14" ><circle cx="7" cy="7" r="6" fill="none" stroke="#c4c4c4" stroke-width="1.3"/><circle cx="7" cy="7" r="2.2" fill="#c4c4c4"/></svg>
<svg style="left:1459px;top:582px" width="10.6" height="9" viewBox="0 0 10.6 9" ><path d="M0 0 H10.6 L5.3 9 Z" fill="#6e6e6e"/></svg>
<div class="t b" style="left:1476px;top:577px;">Additional Settings</div>
<div class="t " style="left:1493px;top:602px;">Sorting Layer</div>
<div class="dd" style="left:1637px;top:600.5px;width:261.5px"></div>
<div class="t " style="left:1642px;top:601.3px;">Default</div>
<div class="t " style="left:1493px;top:627px;">Order in Layer</div>
<div class="fld" style="left:1637px;top:625.2px;width:261.5px"></div>
<div class="t " style="left:1642px;top:627.5px;">3</div>
<div class="sep" style="left:1451px;top:660px;width:453px"></div>
<div class="hdr" style="top:661px"></div>
<svg style="left:1459px;top:669.5px" width="10.6" height="9" viewBox="0 0 10.6 9" ><path d="M0 0 H10.6 L5.3 9 Z" fill="#6e6e6e"/></svg>
<svg style="left:1477px;top:664.5px" width="18" height="18" viewBox="0 0 18 18" ><circle cx="9" cy="9" r="8.2" fill="#3e3e3e" stroke="#a6f04e" stroke-width="1.6"/><path d="M9 9 V0.8 A8.2 8.2 0 0 0 0.8 9 Z M9 9 V17.2 A8.2 8.2 0 0 0 17.2 9 Z" fill="#a6f04e"/></svg>
<div class="t b" style="left:1526px;top:664.5px;color:#e4e4e4">Rigidbody 2D</div>
<svg style="left:1831.9px;top:667.8px" width="12.4" height="12.4" viewBox="0 0 12.4 12.4" ><circle cx="6.2" cy="6.2" r="6.2" fill="#c4c4c4"/><text x="6.2" y="10" font-size="10" font-weight="bold" text-anchor="middle" fill="#3e3e3e" font-family="Liberation Sans, sans-serif">?</text></svg>
<svg style="left:1857px;top:667.8px" width="12" height="12.4" viewBox="0 0 12 12.4" ><g fill="#c4c4c4"><rect x="0" y="2.2" width="6.2" height="1.3"/><rect x="7.6" y="0.3" width="2.4" height="5.2"/><rect x="10" y="2.2" width="2" height="1.3"/><rect x="0" y="8.8" width="1.8" height="1.3"/><rect x="3.7" y="6.8" width="2.4" height="5.3"/><rect x="6.1" y="8.8" width="5.9" height="1.3"/></g></svg>
<svg style="left:1886.3px;top:667.7px" width="3.4" height="12.6" viewBox="0 0 3.4 12.6" ><circle cx="1.7" cy="1.7" r="1.7" fill="#c4c4c4"/><circle cx="1.7" cy="6.3" r="1.7" fill="#c4c4c4"/><circle cx="1.7" cy="10.9" r="1.7" fill="#c4c4c4"/></svg>
<div class="t " style="left:1475px;top:695px;">Body Type</div>
<div class="dd" style="left:1637px;top:693.5px;width:261.5px"></div>
<div class="t " style="left:1642px;top:694.3px;">Dynamic</div>
<div class="t " style="left:1475px;top:720px;">Material</div>
<div class="fld" style="left:1637px;top:718.2px;width:261.5px"></div>
<div class="a" style="left:1877.5px;top:719.2px;width:20px;height:20px;background:#373737;border-radius:0 3px 3px 0"></div>
<div class="t " style="left:1641px;top:720.5px;">None (Physics Material 2D)</div>
<svg style="left:1880.5px;top:722px" width="14" height="14" viewBox="0 0 14 14" ><circle cx="7" cy="7" r="6" fill="none" stroke="#c4c4c4" stroke-width="1.3"/><circle cx="7" cy="7" r="2.2" fill="#c4c4c4"/></svg>
<div class="t " style="left:1475px;top:745px;">Simulated</div>
<div class="cb" style="left:1637px;top:745.5px"></div>
<svg style="left:1639.5px;top:749px" width="12" height="10" viewBox="0 0 12 10" ><path d="M1.2 5.4 L4.4 8.4 L10.8 1.4" fill="none" stroke="#e4e4e4" stroke-width="2"/></svg>
<div class="t " style="left:1475px;top:770px;">Use Auto Mass</div>
<div class="cb" style="left:1637px;top:770.5px"></div>
<div class="t " style="left:1475px;top:795px;">Mass</div>
<div class="fld" style="left:1637px;top:793.2px;width:261.5px"></div>
<div class="t " style="left:1642px;top:795.5px;">1</div>
<div class="t " style="left:1475px;top:820px;">Linear Drag</div>
<div class="fld" style="left:1637px;top:818.2px;width:261.5px"></div>
<div class="t " style="left:1642px;top:820.5px;">0</div>
<div class="t " style="left:1475px;top:845px;">Angular Drag</div>
<div class="fld" style="left:1637px;top:843.2px;width:261.5px"></div>
<div class="t " style="left:1642px;top:845.5px;">0.05</div>
<div class="t " style="left:1475px;top:870px;">Gravity Scale</div>
<div class="fld" style="left:1637px;top:868.2px;width:261.5px"></div>
<div class="t " style="left:1642px;top:870.5px;">1.5</div>
<div class="t " style="left:1475px;top:895px;">Collision Detection</div>
<div class="dd" style="left:1637px;top:893.5px;width:261.5px"></div>
<div class="t " style="left:1642px;top:894.3px;">Discrete</div>
<div class="t " style="left:1475px;top:920px;">Sleeping Mode</div>
<div class="dd" style="left:1637px;top:918.5px;width:261.5px"></div>
<div class="t " style="left:1642px;top:919.3px;">Start Awake</div>
<div class="t " style="left:1475px;top:945px;">Interpolate</div>
<div class="dd" style="left:1637px;top:943.5px;width:261.5px"></div>
<div class="t " style="left:1642px;top:944.3px;">None</div>
<svg style="left:1461px;top:973.5px" width="8" height="10" viewBox="0 0 8 10" ><path d="M0 0 L8 5.0 L0 10 Z" fill="#7a7a7a"/></svg>
<div class="t " style="left:1475px;top:970px;">Constraints</div>
<svg style="left:1461px;top:998.5px" width="8" height="10" viewBox="0 0 8 10" ><path d="M0 0 L8 5.0 L0 10 Z" fill="#7a7a7a"/></svg>
<div class="t " style="left:1475px;top:995px;">Layer Overrides</div>
<svg style="left:1461px;top:1021.5px" width="8" height="10" viewBox="0 0 8 10" ><path d="M0 0 L8 5.0 L0 10 Z" fill="#7a7a7a"/></svg>
<div class="t " style="left:1475px;top:1018px;">Info</div>
<div class="sep" style="left:1451px;top:1047.5px;width:453px"></div>
<div class="hdr" style="top:1048.5px"></div>
<svg style="left:1459px;top:1057.0px" width="10.6" height="9" viewBox="0 0 10.6 9" ><path d="M0 0 H10.6 L5.3 9 Z" fill="#6e6e6e"/></svg>
<svg style="left:1479px;top:1053.0px" width="12" height="17" viewBox="0 0 12 17" ><rect x="1.9" y="1.7" width="8" height="13.6" rx="4" fill="none" stroke="#a6f04e" stroke-width="3.4"/></svg>
<div class="cb" style="left:1501px;top:1052.5px"></div>
<svg style="left:1503.5px;top:1056.0px" width="12" height="10" viewBox="0 0 12 10" ><path d="M1.2 5.4 L4.4 8.4 L10.8 1.4" fill="none" stroke="#e4e4e4" stroke-width="2"/></svg>
<div class="t b" style="left:1526px;top:1052.0px;color:#e4e4e4">Capsule Collider 2D</div>
<svg style="left:1831.9px;top:1055.3px" width="12.4" height="12.4" viewBox="0 0 12.4 12.4" ><circle cx="6.2" cy="6.2" r="6.2" fill="#c4c4c4"/><text x="6.2" y="10" font-size="10" font-weight="bold" text-anchor="middle" fill="#3e3e3e" font-family="Liberation Sans, sans-serif">?</text></svg>
<svg style="left:1857px;top:1055.3px" width="12" height="12.4" viewBox="0 0 12 12.4" ><g fill="#c4c4c4"><rect x="0" y="2.2" width="6.2" height="1.3"/><rect x="7.6" y="0.3" width="2.4" height="5.2"/><rect x="10" y="2.2" width="2" height="1.3"/><rect x="0" y="8.8" width="1.8" height="1.3"/><rect x="3.7" y="6.8" width="2.4" height="5.3"/><rect x="6.1" y="8.8" width="5.9" height="1.3"/></g></svg>
<svg style="left:1886.3px;top:1055.2px" width="3.4" height="12.6" viewBox="0 0 3.4 12.6" ><circle cx="1.7" cy="1.7" r="1.7" fill="#c4c4c4"/><circle cx="1.7" cy="6.3" r="1.7" fill="#c4c4c4"/><circle cx="1.7" cy="10.9" r="1.7" fill="#c4c4c4"/></svg>
<div class="t " style="left:1475px;top:1082px;">Edit Collider</div>
<div class="btn" style="left:1636px;top:1083px;width:40px;height:26px;background:#383838;border-color:#242424"></div>
<svg style="left:1647px;top:1090px" width="18" height="14" viewBox="0 0 18 14" ><g fill="none" stroke="#c4c4c4" stroke-width="1.3"><path d="M2 13 L7 3 H11 L16 13"/><rect x="6.5" y="0.8" width="5" height="4" fill="#383838"/><rect x="0.6" y="11" width="4" height="4" fill="#383838"/><rect x="13.4" y="11" width="4" height="4" fill="#383838"/></g></svg>
<div class="a" style="left:0px;top:685.2px;width:1448.5px;height:1.5px;background:#161616;"></div>
<div class="a" style="left:0px;top:686.5px;width:1448.5px;height:24.5px;background:#282828;"></div>
<div class="a" style="left:0px;top:687.5px;width:101px;height:23.5px;background:#3c3c3c;border-radius:0 3px 0 0"></div>
<svg style="left:8px;top:693px" width="15.5" height="12" viewBox="0 0 16 13" ><path d="M0 1.5 a1.5 1.5 0 0 1 1.5 -1.5 H5.5 L7.5 2 H14.5 a1.5 1.5 0 0 1 1.5 1.5 V11.5 a1.5 1.5 0 0 1 -1.5 1.5 H1.5 a1.5 1.5 0 0 1 -1.5 -1.5 Z" fill="#c8c8c8"/></svg>
<div class="t " style="left:28px;top:690px;">Project</div>
<svg style="left:113px;top:693px" width="13" height="13" viewBox="0 0 13 13" ><rect x="0.6" y="0.6" width="11.8" height="11.8" fill="none" stroke="#c4c4c4" stroke-width="1.2"/><path d="M2.5 3.6 H10.5 M2.5 6.5 H10.5 M2.5 9.4 H10.5" stroke="#c4c4c4" stroke-width="1.9"/></svg>
<div class="t " style="left:131px;top:690px;">Console</div>
<svg style="left:1405.4px;top:691.3px" width="12" height="13" viewBox="0 0 12 13" ><rect x="1" y="7" width="10" height="5" fill="none" stroke="#c4c4c4" stroke-width="1.4"/><path d="M8.9 7 V4.3 a2.9 2.9 0 0 0 -5.8 0" fill="none" stroke="#c4c4c4" stroke-width="1.4"/></svg>
<svg style="left:1430px;top:692px" width="3.4" height="12.6" viewBox="0 0 3.4 12.6" ><circle cx="1.7" cy="1.7" r="1.7" fill="#c4c4c4"/><circle cx="1.7" cy="6.3" r="1.7" fill="#c4c4c4"/><circle cx="1.7" cy="10.9" r="1.7" fill="#c4c4c4"/></svg>
<div class="a" style="left:0px;top:711px;width:1448.5px;height:26px;background:#3c3c3c;"></div>
<svg style="left:8px;top:716px" width="15" height="15" viewBox="0 0 15 15" ><path d="M7.5 0 V15 M0 7.5 H15" stroke="#d2d2d2" stroke-width="1.7"/></svg>
<svg style="left:28px;top:721px" width="10" height="6" viewBox="0 0 10 6" ><path d="M0 0 L10 0 L5.0 6 Z" fill="#c4c4c4"/></svg>
<div class="fld" style="left:867px;top:714px;width:397px;height:20px;border-radius:5px"></div>
<div class="a" style="left:1244px;top:715px;width:19.5px;height:18.5px;background:#363636;border-radius:0 4px 4px 0"></div>
<svg style="left:872px;top:719px" width="10" height="10" viewBox="0 0 10 10" ><circle cx="3.6" cy="3.6" r="2.6" fill="none" stroke="#b0b0b0" stroke-width="1.5"/><path d="M5.6 5.6 L9 9" stroke="#b0b0b0" stroke-width="1.8"/></svg>
<svg style="left:1246px;top:717px" width="14" height="14" viewBox="0 0 14 14" ><g fill="none" stroke="#a8a8a8" stroke-width="1.2"><path d="M3.6 3.6 V0.6 H13.4 V10.4 H10.4"/><rect x="0.6" y="8" width="5.4" height="5.4"/><path d="M6.5 7.5 L10.8 3.2 M7.4 3 H11 V6.6"/></g></svg>
<div class="a" style="left:1267.3px;top:711px;width:1px;height:26px;background:#2a2a2a;"></div>
<div class="a" style="left:1300px;top:711px;width:1px;height:26px;background:#2a2a2a;"></div>
<div class="a" style="left:1332px;top:711px;width:1px;height:26px;background:#2a2a2a;"></div>
<div class="a" style="left:1365px;top:711px;width:1px;height:26px;background:#2a2a2a;"></div>
<div class="a" style="left:1397px;top:711px;width:1px;height:26px;background:#2a2a2a;"></div>
<div class="a" style="left:0px;top:736px;width:1448.5px;height:1px;background:#2a2a2a;"></div>
<svg style="left:1276px;top:715px" width="15" height="17" viewBox="0 0 15 17" ><g fill="#c4c4c4"><rect x="1.5" y="0" width="7" height="7"/><circle cx="4.5" cy="12.2" r="4.2"/><path d="M10 3.5 L14.5 12.5 H8.5 Z"/></g></svg>
<svg style="left:1308px;top:717px" width="14" height="13" viewBox="0 0 14 13" ><path d="M0.5 7.5 L7.5 0.8 H13.2 V6.2 L6 13 Z" fill="#c4c4c4" transform="rotate(0)"/><circle cx="10.6" cy="3.6" r="1.3" fill="#3c3c3c"/></svg>
<svg style="left:1340px;top:715px" width="17" height="17" viewBox="0 0 17 17" ><circle cx="8.5" cy="8.5" r="8.5" fill="#d8d8d8"/><rect x="7.3" y="3.2" width="2.4" height="7" fill="#3c3c3c"/><rect x="7.3" y="11.6" width="2.4" height="2.4" fill="#3c3c3c"/></svg>
<svg style="left:1373px;top:716px" width="15" height="14" viewBox="0 0 15 14" ><path d="M7.5 0 L9.8 4.9 L15 5.5 L11.1 9.1 L12.2 14.3 L7.5 11.7 L2.8 14.3 L3.9 9.1 L0 5.5 L5.2 4.9 Z" fill="#8a8a8a"/></svg>
<svg style="left:1406px;top:718px" width="18" height="11" viewBox="0 0 18 11" ><path d="M0 5.5 Q9 -4.5 18 5.5 Q9 15.5 0 5.5 Z" fill="#6a6a6a"/><circle cx="9" cy="5.5" r="3.6" fill="#5a5a5a" stroke="#7a7a7a" stroke-width="1"/></svg>
<div class="t " style="left:1425px;top:714.5px;">21</div>
<div class="a" style="left:0px;top:737px;width:210px;height:366px;background:#383838;"></div>
<div class="a" style="left:210px;top:737px;width:15px;height:366px;background:#323232;"></div>
<div class="a" style="left:225px;top:737px;width:1px;height:366px;background:#232323;"></div>
<div class="a" style="left:211px;top:757px;width:12px;height:200px;background:#5c5c5c;border-radius:6px"></div>
<svg style="left:213px;top:744.8px" width="9" height="5.4" viewBox="0 0 9 5.4" ><path d="M0 5.4 L4.5 0 L9 5.4 Z" fill="#c4c4c4"/></svg>
<svg style="left:213px;top:1095px" width="9" height="5" viewBox="0 0 9 5" ><path d="M0 0 L4.5 5 L9 0 Z" fill="#c4c4c4"/></svg>
<div class="a" style="left:226px;top:737px;width:1222.5px;height:25px;background:#3c3c3c;"></div>
<div class="a" style="left:226px;top:762px;width:1222.5px;height:1px;background:#2c2c2c;"></div>
<div class="a" style="left:226px;top:763px;width:1222.5px;height:320px;background:#333333;"></div>
<div class="a" style="left:226px;top:1083px;width:1222.5px;height:20px;background:#3c3c3c;"></div>
<div class="a" style="left:1360px;top:1093.4px;width:60px;height:2.8px;background:#5e5e5e;border-radius:1.4px"></div>
<div class="a" style="left:1415px;top:1088.5px;width:13px;height:13px;border-radius:50%;background:#a8a8a8"></div>
<div class="t " style="left:231px;top:740px;">Assets</div>
<svg style="left:286.8px;top:744.5px" width="7" height="10" viewBox="0 0 7 10" ><path d="M1 1 L6 5 L1 9" fill="none" stroke="#9a9a9a" stroke-width="1.4"/></svg>
<div class="t b" style="left:302px;top:740px;">Scenes</div>
<svg style="left:260px;top:782.5px" width="91" height="106" viewBox="72 92 668 778" ><path d="M375 95 L72 280 L405 465 L740 280 L432 95 L432 222 L565 298 L405 398 L245 298 L375 225 Z" fill="#fbfbfb" stroke="#fbfbfb" stroke-width="2.5"/>
<path d="M72 282 L405 465 L405 870 L88 682 L195 622 L350 705 L350 495 L185 405 L185 565 L72 625 Z" fill="#e6e6e6" stroke="#e6e6e6" stroke-width="2.5"/>
<path d="M740 282 L405 465 L405 870 L722 682 L615 622 L460 705 L460 495 L625 405 L625 565 L740 625 Z" fill="#cbcbcb" stroke="#cbcbcb" stroke-width="2.5"/></svg>
<svg style="left:395px;top:782.5px" width="91" height="106" viewBox="72 92 668 778" ><path d="M375 95 L72 280 L405 465 L740 280 L432 95 L432 222 L565 298 L405 398 L245 298 L375 225 Z" fill="#fbfbfb" stroke="#fbfbfb" stroke-width="2.5"/>
<path d="M72 282 L405 465 L405 870 L88 682 L195 622 L350 705 L350 495 L185 405 L185 565 L72 625 Z" fill="#e6e6e6" stroke="#e6e6e6" stroke-width="2.5"/>
<path d="M740 282 L405 465 L405 870 L722 682 L615 622 L460 705 L460 495 L625 405 L625 565 L740 625 Z" fill="#cbcbcb" stroke="#cbcbcb" stroke-width="2.5"/></svg>
<div class="t" style="left:224px;width:160px;top:897px;text-align:center;font-size:13.5px;letter-spacing:0.2px">SampleScene</div>
<div class="t" style="left:359px;width:160px;top:897px;text-align:center;font-size:13.5px;letter-spacing:0.3px">Stage1</div>
<svg style="left:5px;top:743px" width="10" height="8" viewBox="0 0 10 8" ><path d="M0 0 H10 L5 8 Z" fill="#6e6e6e"/></svg>
<svg style="left:23px;top:739px" width="15" height="14" viewBox="0 0 15 14" ><path d="M7.5 0 L9.8 4.9 L15 5.5 L11.1 9.1 L12.2 14.3 L7.5 11.7 L2.8 14.3 L3.9 9.1 L0 5.5 L5.2 4.9 Z" fill="#c8c8c8"/></svg>
<div class="t b" style="left:44px;top:737px;">Favorites</div>
<svg style="left:39px;top:760px" width="15" height="15" viewBox="0 0 15 15" ><circle cx="6" cy="6" r="4.6" fill="none" stroke="#c4c4c4" stroke-width="1.5"/><path d="M9.4 9.4 L14 14" stroke="#c4c4c4" stroke-width="2" stroke-linecap="round"/></svg>
<div class="t " style="left:60px;top:757px;">All Materials</div>
<svg style="left:39px;top:780px" width="15" height="15" viewBox="0 0 15 15" ><circle cx="6" cy="6" r="4.6" fill="none" stroke="#c4c4c4" stroke-width="1.5"/><path d="M9.4 9.4 L14 14" stroke="#c4c4c4" stroke-width="2" stroke-linecap="round"/></svg>
<div class="t " style="left:60px;top:777px;">All Models</div>
<svg style="left:39px;top:800px" width="15" height="15" viewBox="0 0 15 15" ><circle cx="6" cy="6" r="4.6" fill="none" stroke="#c4c4c4" stroke-width="1.5"/><path d="M9.4 9.4 L14 14" stroke="#c4c4c4" stroke-width="2" stroke-linecap="round"/></svg>
<div class="t " style="left:60px;top:797px;">All Prefabs</div>
<svg style="left:5px;top:842px" width="10" height="8" viewBox="0 0 10 8" ><path d="M0 0 H10 L5 8 Z" fill="#6e6e6e"/></svg>
<svg style="left:22px;top:839px" width="18" height="13" viewBox="0 0 18 13" ><path d="M0.7 12 V1.7 a1 1 0 0 1 1 -1 H5.5 L7.5 2.7 H13.3 a1 1 0 0 1 1 1 V5" fill="none" stroke="#c8c8c8" stroke-width="1.4"/><path d="M0.7 12.6 L3.6 5 H17.6 L14.6 12.6 Z" fill="#c8c8c8"/></svg>
<div class="t b" style="left:44px;top:836px;">Assets</div>
<svg style="left:39px;top:860px" width="15.5" height="12" viewBox="0 0 16 13" ><path d="M0 1.5 a1.5 1.5 0 0 1 1.5 -1.5 H5.5 L7.5 2 H14.5 a1.5 1.5 0 0 1 1.5 1.5 V11.5 a1.5 1.5 0 0 1 -1.5 1.5 H1.5 a1.5 1.5 0 0 1 -1.5 -1.5 Z" fill="#c8c8c8"/></svg>
<div class="t " style="left:60px;top:856px;">Images</div>
<svg style="left:39px;top:880px" width="15.5" height="12" viewBox="0 0 16 13" ><path d="M0 1.5 a1.5 1.5 0 0 1 1.5 -1.5 H5.5 L7.5 2 H14.5 a1.5 1.5 0 0 1 1.5 1.5 V11.5 a1.5 1.5 0 0 1 -1.5 1.5 H1.5 a1.5 1.5 0 0 1 -1.5 -1.5 Z" fill="#c8c8c8"/></svg>
<div class="t " style="left:60px;top:876px;">Player</div>
<svg style="left:39px;top:900px" width="15.5" height="12" viewBox="0 0 16 13" ><path d="M0 1.5 a1.5 1.5 0 0 1 1.5 -1.5 H5.5 L7.5 2 H14.5 a1.5 1.5 0 0 1 1.5 1.5 V11.5 a1.5 1.5 0 0 1 -1.5 1.5 H1.5 a1.5 1.5 0 0 1 -1.5 -1.5 Z" fill="#c8c8c8"/></svg>
<div class="t " style="left:60px;top:896px;">Prefab</div>
<div class="a" style="left:0px;top:916px;width:210px;height:20px;background:#4d4d4d;"></div>
<svg style="left:39px;top:920px" width="15.5" height="12" viewBox="0 0 16 13" ><path d="M0 1.5 a1.5 1.5 0 0 1 1.5 -1.5 H5.5 L7.5 2 H14.5 a1.5 1.5 0 0 1 1.5 1.5 V11.5 a1.5 1.5 0 0 1 -1.5 1.5 H1.5 a1.5 1.5 0 0 1 -1.5 -1.5 Z" fill="#c8c8c8"/></svg>
<div class="t " style="left:60px;top:916px;">Scenes</div>
<svg style="left:5px;top:942px" width="10" height="8" viewBox="0 0 10 8" ><path d="M0 0 H10 L5 8 Z" fill="#6e6e6e"/></svg>
<svg style="left:22px;top:939px" width="18" height="13" viewBox="0 0 18 13" ><path d="M0.7 12 V1.7 a1 1 0 0 1 1 -1 H5.5 L7.5 2.7 H13.3 a1 1 0 0 1 1 1 V5" fill="none" stroke="#c8c8c8" stroke-width="1.4"/><path d="M0.7 12.6 L3.6 5 H17.6 L14.6 12.6 Z" fill="#c8c8c8"/></svg>
<div class="t b" style="left:44px;top:936px;">Packages</div>
<svg style="left:24px;top:961px" width="8" height="10" viewBox="0 0 8 10" ><path d="M0 0 L8 5.0 L0 10 Z" fill="#6e6e6e"/></svg>
<svg style="left:39px;top:960px" width="15.5" height="12" viewBox="0 0 16 13" ><path d="M0 1.5 a1.5 1.5 0 0 1 1.5 -1.5 H5.5 L7.5 2 H14.5 a1.5 1.5 0 0 1 1.5 1.5 V11.5 a1.5 1.5 0 0 1 -1.5 1.5 H1.5 a1.5 1.5 0 0 1 -1.5 -1.5 Z" fill="#c8c8c8"/></svg>
<div class="t " style="left:60px;top:956px;">2D Animation</div>
<svg style="left:24px;top:981px" width="8" height="10" viewBox="0 0 8 10" ><path d="M0 0 L8 5.0 L0 10 Z" fill="#6e6e6e"/></svg>
<svg style="left:39px;top:980px" width="15.5" height="12" viewBox="0 0 16 13" ><path d="M0 1.5 a1.5 1.5 0 0 1 1.5 -1.5 H5.5 L7.5 2 H14.5 a1.5 1.5 0 0 1 1.5 1.5 V11.5 a1.5 1.5 0 0 1 -1.5 1.5 H1.5 a1.5 1.5 0 0 1 -1.5 -1.5 Z" fill="#c8c8c8"/></svg>
<div class="t " style="left:60px;top:976px;">2D Aseprite Importer</div>
<svg style="left:24px;top:1001px" width="8" height="10" viewBox="0 0 8 10" ><path d="M0 0 L8 5.0 L0 10 Z" fill="#6e6e6e"/></svg>
<svg style="left:39px;top:1000px" width="15.5" height="12" viewBox="0 0 16 13" ><path d="M0 1.5 a1.5 1.5 0 0 1 1.5 -1.5 H5.5 L7.5 2 H14.5 a1.5 1.5 0 0 1 1.5 1.5 V11.5 a1.5 1.5 0 0 1 -1.5 1.5 H1.5 a1.5 1.5 0 0 1 -1.5 -1.5 Z" fill="#c8c8c8"/></svg>
<div class="t " style="left:60px;top:996px;">2D Common</div>
<svg style="left:24px;top:1021px" width="8" height="10" viewBox="0 0 8 10" ><path d="M0 0 L8 5.0 L0 10 Z" fill="#6e6e6e"/></svg>
<svg style="left:39px;top:1020px" width="15.5" height="12" viewBox="0 0 16 13" ><path d="M0 1.5 a1.5 1.5 0 0 1 1.5 -1.5 H5.5 L7.5 2 H14.5 a1.5 1.5 0 0 1 1.5 1.5 V11.5 a1.5 1.5 0 0 1 -1.5 1.5 H1.5 a1.5 1.5 0 0 1 -1.5 -1.5 Z" fill="#c8c8c8"/></svg>
<div class="t " style="left:60px;top:1016px;">2D Pixel Perfect</div>
<svg style="left:24px;top:1041px" width="8" height="10" viewBox="0 0 8 10" ><path d="M0 0 L8 5.0 L0 10 Z" fill="#6e6e6e"/></svg>
<svg style="left:39px;top:1040px" width="15.5" height="12" viewBox="0 0 16 13" ><path d="M0 1.5 a1.5 1.5 0 0 1 1.5 -1.5 H5.5 L7.5 2 H14.5 a1.5 1.5 0 0 1 1.5 1.5 V11.5 a1.5 1.5 0 0 1 -1.5 1.5 H1.5 a1.5 1.5 0 0 1 -1.5 -1.5 Z" fill="#c8c8c8"/></svg>
<div class="t " style="left:60px;top:1036px;">2D PSD Importer</div>
<svg style="left:24px;top:1061px" width="8" height="10" viewBox="0 0 8 10" ><path d="M0 0 L8 5.0 L0 10 Z" fill="#6e6e6e"/></svg>
<svg style="left:39px;top:1060px" width="15.5" height="12" viewBox="0 0 16 13" ><path d="M0 1.5 a1.5 1.5 0 0 1 1.5 -1.5 H5.5 L7.5 2 H14.5 a1.5 1.5 0 0 1 1.5 1.5 V11.5 a1.5 1.5 0 0 1 -1.5 1.5 H1.5 a1.5 1.5 0 0 1 -1.5 -1.5 Z" fill="#c8c8c8"/></svg>
<div class="t " style="left:60px;top:1056px;">2D Sprite</div>
<svg style="left:24px;top:1081px" width="8" height="10" viewBox="0 0 8 10" ><path d="M0 0 L8 5.0 L0 10 Z" fill="#6e6e6e"/></svg>
<svg style="left:39px;top:1080px" width="15.5" height="12" viewBox="0 0 16 13" ><path d="M0 1.5 a1.5 1.5 0 0 1 1.5 -1.5 H5.5 L7.5 2 H14.5 a1.5 1.5 0 0 1 1.5 1.5 V11.5 a1.5 1.5 0 0 1 -1.5 1.5 H1.5 a1.5 1.5 0 0 1 -1.5 -1.5 Z" fill="#c8c8c8"/></svg>
<div class="t " style="left:60px;top:1076px;">2D SpriteShape</div>
<svg style="left:24px;top:1101px" width="8" height="10" viewBox="0 0 8 10" ><path d="M0 0 L8 5.0 L0 10 Z" fill="#6e6e6e"/></svg>
<svg style="left:39px;top:1100px" width="15.5" height="12" viewBox="0 0 16 13" ><path d="M0 1.5 a1.5 1.5 0 0 1 1.5 -1.5 H5.5 L7.5 2 H14.5 a1.5 1.5 0 0 1 1.5 1.5 V11.5 a1.5 1.5 0 0 1 -1.5 1.5 H1.5 a1.5 1.5 0 0 1 -1.5 -1.5 Z" fill="#c8c8c8"/></svg>
<div class="t " style="left:60px;top:1096px;">2D Tilemap Editor</div>
</div></body></html>
